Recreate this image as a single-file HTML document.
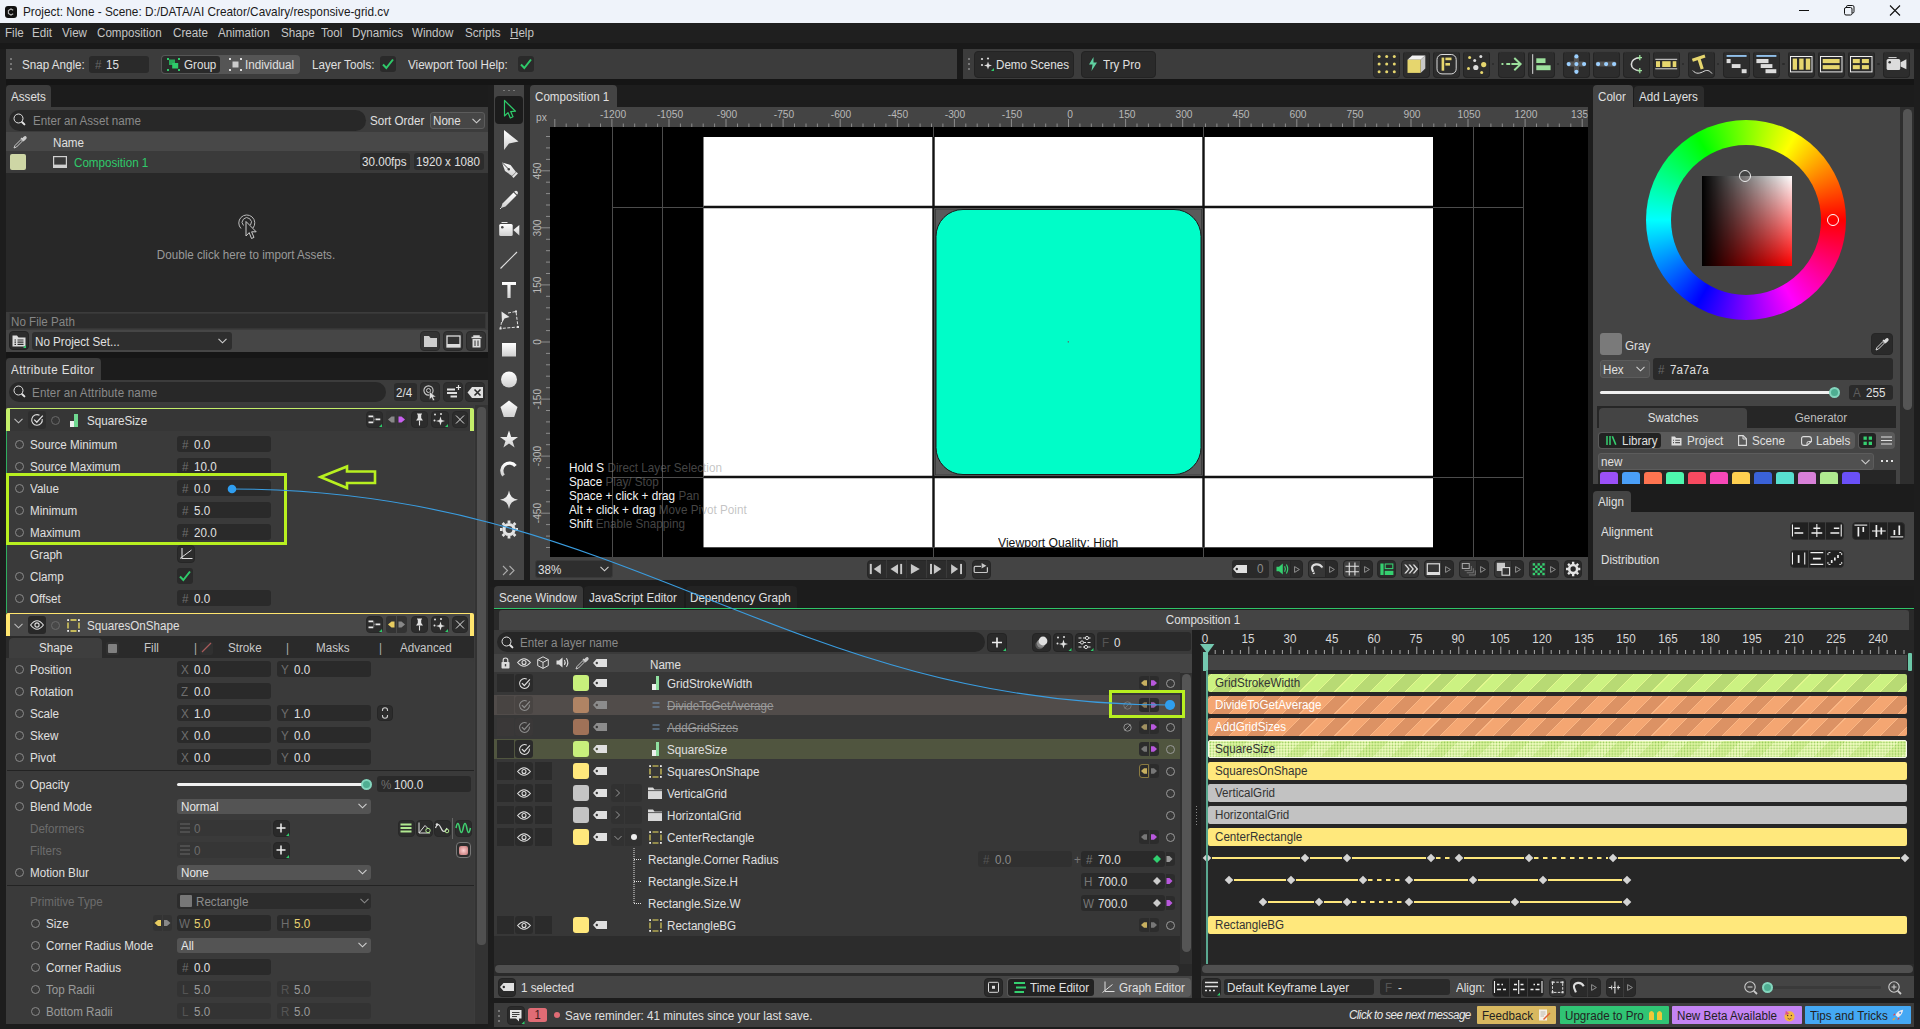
<!DOCTYPE html><html><head><meta charset="utf-8"><title>Cavalry</title><style>
*{box-sizing:border-box;margin:0;padding:0}
html,body{width:1920px;height:1029px;overflow:hidden;background:#1d1d1d}
body{font-family:"Liberation Sans",sans-serif;font-size:12.5px;letter-spacing:0;color:#e0e0e0;-webkit-font-smoothing:antialiased}
#app{position:relative;width:1920px;height:1029px;overflow:hidden;background:#1d1d1d}
.a{position:absolute}
.t{position:absolute;white-space:nowrap;line-height:18px;height:18px;transform:scaleX(.93);transform-origin:0 50%}
.t[style*="text-align:center"]{transform-origin:50% 50%}
.g{color:#8a8a8a}
.d{color:#777}
.fld{position:absolute;background:#2a2a2a;border-radius:3px;height:17px}
.btn{position:absolute;background:#2a2a2a;border-radius:4px;border:1px solid #232323}
.cmb{position:absolute;background:#505050;border-radius:3px;height:17px;border:1px solid #5c5c5c}
.pnl{position:absolute;background:#3a3a3a}
.tab{position:absolute;background:#3a3a3a;border-radius:4px 4px 0 0;height:22px}
.tab2{position:absolute;background:#444;border-radius:4px 4px 0 0;height:22px}
svg{position:absolute;overflow:visible}
.rad{position:absolute;width:9px;height:9px;border:1.2px solid #8a8a8a;border-radius:50%}
</style></head><body><div id="app">
<div class="a" style="left:0;top:0;width:1920px;height:23px;background:#eff3fa"></div>
<svg style="left:5px;top:6px" width="12" height="12" viewBox="0 0 12 12"><rect x="0" y="0" width="12" height="12" rx="3" fill="#111"/><path d="M8.2 4.2 L6 3 L3.4 4.5 V7.5 L6 9 L8.2 7.8" fill="none" stroke="#bbb" stroke-width="1.1"/></svg>
<div class="t" style="left:23px;top:2.5px;color:#1a1a1a;font-size:12.7px">Project: None - Scene: D:/DATA/AI Creator/Cavalry/responsive-grid.cv</div>
<svg style="left:1799px;top:5px" width="102" height="11" viewBox="0 0 102 11"><path d="M0 5.5H10" stroke="#111" stroke-width="1"/><rect x="45.5" y="2.5" width="7.5" height="7.5" rx="1.5" fill="none" stroke="#111"/><path d="M47.5 2.5V1.8Q47.5 .5 48.8 .5H53.5Q55 .5 55 2V6.7Q55 8 53.7 8H53" fill="none" stroke="#111"/><path d="M91 0.5L101 10.5M101 0.5L91 10.5" stroke="#111" stroke-width="1.1"/></svg>
<div class="a" style="left:0;top:23px;width:1920px;height:20px;background:#1f1f1f"></div>
<div class="a" style="left:0;top:43px;width:1920px;height:6px;background:#191919"></div>
<div class="t" style="left:5px;top:24px;color:#c6c6c6">File</div>
<div class="t" style="left:32px;top:24px;color:#c6c6c6">Edit</div>
<div class="t" style="left:62px;top:24px;color:#c6c6c6">View</div>
<div class="t" style="left:97px;top:24px;color:#c6c6c6">Composition</div>
<div class="t" style="left:173px;top:24px;color:#c6c6c6">Create</div>
<div class="t" style="left:218px;top:24px;color:#c6c6c6">Animation</div>
<div class="t" style="left:281px;top:24px;color:#c6c6c6">Shape</div>
<div class="t" style="left:321px;top:24px;color:#c6c6c6">Tool</div>
<div class="t" style="left:352px;top:24px;color:#c6c6c6">Dynamics</div>
<div class="t" style="left:412px;top:24px;color:#c6c6c6">Window</div>
<div class="t" style="left:465px;top:24px;color:#c6c6c6">Scripts</div>
<div class="t" style="left:510px;top:24px;color:#c6c6c6"><u>H</u>elp</div>
<div class="a" style="left:6px;top:79px;width:1908px;height:6px;background:#151515"></div>
<div class="a" style="left:6px;top:49px;width:951px;height:30px;background:#3c3c3c"></div>
<div class="a" style="left:957px;top:49px;width:6px;height:30px;background:#1a1a1a"></div>
<div class="a" style="left:963px;top:49px;width:951px;height:30px;background:#3c3c3c"></div>
<div class="a" style="left:10px;top:58px;width:2px;height:2px;background:#777"></div>
<div class="a" style="left:10px;top:63px;width:2px;height:2px;background:#777"></div>
<div class="a" style="left:10px;top:68px;width:2px;height:2px;background:#777"></div>
<div class="a" style="left:968px;top:58px;width:2px;height:2px;background:#777"></div>
<div class="a" style="left:968px;top:63px;width:2px;height:2px;background:#777"></div>
<div class="a" style="left:968px;top:68px;width:2px;height:2px;background:#777"></div>
<div class="t" style="left:22px;top:56px">Snap Angle:</div>
<div class="fld" style="left:89px;top:56px;width:60px"></div><div class="t d" style="left:95px;top:56px;color:#666">#</div><div class="t" style="left:106px;top:56px">15</div>
<div class="a" style="left:161px;top:55px;width:139px;height:19px;background:#555;border-radius:4px"></div>
<div class="a" style="left:162px;top:56px;width:58px;height:17px;background:#2a2a2a;border-radius:3px"></div>
<svg style="left:167px;top:58px" width="13" height="13" viewBox="0 0 13 13"><g fill="#2fca6a"><rect x="0" y="0" width="2" height="2"/><rect x="11" y="0" width="2" height="2"/><rect x="0" y="11" width="2" height="2"/><rect x="11" y="11" width="2" height="2"/><rect x="2" y="1.5" width="6" height="5.5" fill="#28a858"/><rect x="5.2" y="5" width="6" height="5.5"/></g></svg>
<div class="t" style="left:184px;top:56px">Group</div>
<svg style="left:229px;top:58px" width="13" height="13" viewBox="0 0 13 13"><g fill="#ddd"><rect x="0" y="0" width="2" height="2"/><rect x="11" y="0" width="2" height="2"/><rect x="0" y="11" width="2" height="2"/><rect x="11" y="11" width="2" height="2"/><rect x="3.5" y="3.5" width="6" height="6" fill="#ccc"/></g></svg>
<div class="t" style="left:245px;top:56px">Individual</div>
<div class="t" style="left:312px;top:56px">Layer Tools:</div>
<div class="t" style="left:408px;top:56px">Viewport Tool Help:</div>
<div class="fld" style="left:380px;top:56px;width:16px;height:16px"></div><svg style="left:382px;top:58px" width="12" height="12" viewBox="0 0 12 12"><path d="M1 6.5L4.3 10L11 1.5" fill="none" stroke="#2fca6a" stroke-width="2"/></svg>
<div class="fld" style="left:518px;top:56px;width:16px;height:16px"></div><svg style="left:520px;top:58px" width="12" height="12" viewBox="0 0 12 12"><path d="M1 6.5L4.3 10L11 1.5" fill="none" stroke="#2fca6a" stroke-width="2"/></svg>
<div class="btn" style="left:974px;top:51px;width:100px;height:27px"></div>
<svg style="left:980px;top:57px" width="15" height="15" viewBox="0 0 15 15"><g fill="#ddd"><circle cx="2" cy="2" r="1.1"/><circle cx="8" cy="1.5" r="1.1"/><circle cx="2" cy="8" r="1.1"/><path d="M8 4.5L9 7.5L12 8.5L9 9.5L8 12.5L7 9.5L4 8.5L7 7.5Z"/></g><path d="M14 11V14H11Z" fill="#2fca6a"/></svg>
<div class="t" style="left:996px;top:56px">Demo Scenes</div>
<div class="btn" style="left:1081px;top:51px;width:75px;height:27px"></div>
<svg style="left:1088px;top:57px" width="10" height="14" viewBox="0 0 10 14"><path d="M5.5 0L1 7.5H4.5L3.5 14L9 5.5H5.5Z" fill="#5fd0a0"/></svg>
<div class="t" style="left:1103px;top:56px">Try Pro</div>
<div class="btn" style="left:1372.5px;top:51px;width:27px;height:26.5px;background:#2d2d2d;border-color:#242424;border-top-color:#3a3a3a"></div>
<svg style="left:1372.5px;top:51px" width="27" height="27" viewBox="0 0 27 27"><circle cx="6.1" cy="5.5" r="1.5" fill="#e6d66e"/><circle cx="6.1" cy="13.1" r="1.5" fill="#e6d66e"/><circle cx="6.1" cy="20.7" r="1.5" fill="#e6d66e"/><circle cx="13.7" cy="5.5" r="1.5" fill="#e6d66e"/><circle cx="13.7" cy="13.1" r="1.5" fill="#e6d66e"/><circle cx="13.7" cy="20.7" r="1.5" fill="#e6d66e"/><circle cx="21.3" cy="5.5" r="1.5" fill="#e6d66e"/><circle cx="21.3" cy="13.1" r="1.5" fill="#e6d66e"/><circle cx="21.3" cy="20.7" r="1.5" fill="#e6d66e"/></svg>
<div class="btn" style="left:1402.5px;top:51px;width:27px;height:26.5px;background:#2d2d2d;border-color:#242424;border-top-color:#3a3a3a"></div>
<svg style="left:1402.5px;top:51px" width="27" height="27" viewBox="0 0 27 27"><path d="M4.5 8.75L9.2 4.4H22.3L17.6 8.75Z" fill="#f2f2f2"/><path d="M17.6 8.75L22.3 4.4V17.5L17.6 21.9Z" fill="#c8c8c8"/><rect x="4.5" y="8.75" width="13.1" height="13.15" fill="#e6d66e"/></svg>
<div class="btn" style="left:1432.5px;top:51px;width:27px;height:26.5px;background:#2d2d2d;border-color:#242424;border-top-color:#3a3a3a"></div>
<svg style="left:1432.5px;top:51px" width="27" height="27" viewBox="0 0 27 27"><rect x="4" y="3.5" width="19.2" height="19.4" rx="5" fill="none" stroke="#dcdcdc" stroke-width="1"/><rect x="8.6" y="6.6" width="2.6" height="13.1" fill="#e6d66e"/><rect x="12.4" y="6.6" width="6.1" height="2.6" fill="#e6d66e"/><rect x="12.4" y="12" width="4.6" height="2.6" fill="#e6d66e"/></svg>
<div class="btn" style="left:1462.5px;top:51px;width:27px;height:26.5px;background:#2d2d2d;border-color:#242424;border-top-color:#3a3a3a"></div>
<svg style="left:1462.5px;top:51px" width="27" height="27" viewBox="0 0 27 27"><circle cx="6.6" cy="6.6" r="1.5" fill="#e6d66e"/><circle cx="17.8" cy="5.5" r="1.5" fill="#dcdcdc"/><circle cx="11.7" cy="9.5" r="1.5" fill="#dcdcdc"/><circle cx="20.7" cy="13.6" r="2.6" fill="#e6d66e"/><circle cx="12.8" cy="16.5" r="2.6" fill="#dcdcdc"/><circle cx="5.5" cy="17.5" r="1.5" fill="#e6d66e"/><circle cx="18.7" cy="21.4" r="1.5" fill="#e6d66e"/></svg>
<div class="btn" style="left:1497.5px;top:51px;width:27px;height:26.5px;background:#2d2d2d;border-color:#242424;border-top-color:#3a3a3a"></div>
<svg style="left:1497.5px;top:51px" width="27" height="27" viewBox="0 0 27 27"><path d="M3.5 13.1H5.4M8.3 13.1H12.2M13.4 13.1H22.4M16.3 7L22.6 13.1L16.3 19.2" fill="none" stroke="#9ce09c" stroke-width="2"/></svg>
<div class="btn" style="left:1527.5px;top:51px;width:27px;height:26.5px;background:#2d2d2d;border-color:#242424;border-top-color:#3a3a3a"></div>
<svg style="left:1527.5px;top:51px" width="27" height="27" viewBox="0 0 27 27"><path d="M4.7 3.2V22.9" stroke="#dcdcdc" stroke-width="1"/><rect x="8.3" y="7.3" width="9.2" height="4.7" fill="#9ce09c"/><rect x="8.3" y="14.3" width="14.3" height="4.9" fill="#9ce09c"/></svg>
<div class="btn" style="left:1562.5px;top:51px;width:27px;height:26.5px;background:#2d2d2d;border-color:#242424;border-top-color:#3a3a3a"></div>
<svg style="left:1562.5px;top:51px" width="27" height="27" viewBox="0 0 27 27"><path d="M5.7 13.1H21.1M13.4 5.4V20.8" stroke="#555" stroke-width="5"/><circle cx="13.4" cy="13.1" r="2.1" fill="#9cd0ff"/><circle cx="5.7" cy="13.1" r="2.1" fill="#9cd0ff"/><circle cx="21.1" cy="13.1" r="2.1" fill="#9cd0ff"/><circle cx="13.4" cy="5.4" r="2.1" fill="#9cd0ff"/><circle cx="13.4" cy="20.8" r="2.1" fill="#9cd0ff"/></svg>
<div class="btn" style="left:1592.5px;top:51px;width:27px;height:26.5px;background:#2d2d2d;border-color:#242424;border-top-color:#3a3a3a"></div>
<svg style="left:1592.5px;top:51px" width="27" height="27" viewBox="0 0 27 27"><path d="M5.1 13.1H21.1" stroke="#555" stroke-width="5" stroke-linecap="round"/><circle cx="5.1" cy="13.1" r="2.1" fill="#9cd0ff"/><circle cx="13.1" cy="13.1" r="2.1" fill="#9cd0ff"/><circle cx="21.1" cy="13.1" r="2.1" fill="#9cd0ff"/></svg>
<div class="btn" style="left:1622.5px;top:51px;width:27px;height:26.5px;background:#2d2d2d;border-color:#242424;border-top-color:#3a3a3a"></div>
<svg style="left:1622.5px;top:51px" width="27" height="27" viewBox="0 0 27 27"><path d="M17 6.6C5.5 7.5 5.5 18.8 17 19.7" fill="none" stroke="#dcdcdc" stroke-width="1.6"/><path d="M14.5 6.6H19M16.8 4V9.2M14.5 19.7H19M16.8 17.1V22.3" stroke="#9ce09c" stroke-width="1.3"/></svg>
<div class="btn" style="left:1652.5px;top:51px;width:27px;height:26.5px;background:#2d2d2d;border-color:#242424;border-top-color:#3a3a3a"></div>
<svg style="left:1652.5px;top:51px" width="27" height="27" viewBox="0 0 27 27"><path d="M2.3 8.3H24.2M2.3 17.8H24.2" stroke="#dcdcdc" stroke-width="1"/><rect x="3" y="10.2" width="4" height="5.8" fill="#e6d66e"/><rect x="9.2" y="10.2" width="8.4" height="5.8" fill="#e6d66e"/><rect x="19.7" y="10.2" width="3.6" height="5.8" fill="#e6d66e"/></svg>
<div class="btn" style="left:1687.5px;top:51px;width:27px;height:26.5px;background:#2d2d2d;border-color:#242424;border-top-color:#3a3a3a"></div>
<svg style="left:1687.5px;top:51px" width="27" height="27" viewBox="0 0 27 27"><path d="M4.4 9.2L17 5M10.8 7.2L14.2 18" stroke="#e6d66e" stroke-width="3.2" fill="none"/><path d="M4.8 19.5C8 23.5 12 22.5 16 20.2C20 18.3 22.5 20.5 24 22.6" fill="none" stroke="#dcdcdc" stroke-width="1"/></svg>
<div class="btn" style="left:1722.5px;top:51px;width:27px;height:26.5px;background:#2d2d2d;border-color:#242424;border-top-color:#3a3a3a"></div>
<svg style="left:1722.5px;top:51px" width="27" height="27" viewBox="0 0 27 27"><rect x="3.6" y="4.1" width="20" height="1.7" fill="#9cd0ff"/><rect x="3.6" y="8" width="4" height="4.1" fill="#dcdcdc"/><rect x="8.75" y="13.1" width="8.75" height="3.9" fill="#dcdcdc"/><rect x="18.7" y="18.2" width="4.9" height="4" fill="#dcdcdc"/></svg>
<div class="btn" style="left:1752.5px;top:51px;width:27px;height:26.5px;background:#2d2d2d;border-color:#242424;border-top-color:#3a3a3a"></div>
<svg style="left:1752.5px;top:51px" width="27" height="27" viewBox="0 0 27 27"><rect x="3.4" y="4.1" width="20" height="1.7" fill="#9cd0ff"/><rect x="3.4" y="8" width="12.1" height="4.1" fill="#dcdcdc"/><rect x="7.7" y="13.1" width="11.7" height="3.9" fill="#dcdcdc"/><rect x="12.5" y="18.2" width="10.8" height="4" fill="#dcdcdc"/></svg>
<div class="btn" style="left:1787.5px;top:51px;width:27px;height:26.5px;background:#2d2d2d;border-color:#242424;border-top-color:#3a3a3a"></div>
<svg style="left:1787.5px;top:51px" width="27" height="27" viewBox="0 0 27 27"><rect x="2.5" y="5.5" width="21.5" height="15.4" fill="none" stroke="#eee" stroke-width="1"/><rect x="4.7" y="7.6" width="4.3" height="11.1" fill="#e6d66e"/><rect x="11.2" y="7.6" width="4.4" height="11.1" fill="#e6d66e"/><rect x="17.8" y="7.6" width="4.4" height="11.1" fill="#e6d66e"/></svg>
<div class="btn" style="left:1817.5px;top:51px;width:27px;height:26.5px;background:#2d2d2d;border-color:#242424;border-top-color:#3a3a3a"></div>
<svg style="left:1817.5px;top:51px" width="27" height="27" viewBox="0 0 27 27"><rect x="2.5" y="5.5" width="21.5" height="15.4" fill="none" stroke="#eee" stroke-width="1"/><rect x="4.7" y="8" width="16.9" height="4.1" fill="#e6d66e"/><rect x="4.7" y="14.1" width="16.9" height="4.1" fill="#e6d66e"/></svg>
<div class="btn" style="left:1847.5px;top:51px;width:27px;height:26.5px;background:#2d2d2d;border-color:#242424;border-top-color:#3a3a3a"></div>
<svg style="left:1847.5px;top:51px" width="27" height="27" viewBox="0 0 27 27"><rect x="2.5" y="5.5" width="21.5" height="15.4" fill="none" stroke="#eee" stroke-width="1"/><rect x="4.8" y="8" width="7" height="4.1" fill="#e6d66e"/><rect x="13.9" y="8" width="7" height="4.1" fill="#e6d66e"/><rect x="4.8" y="14.1" width="7" height="4.1" fill="#e6d66e"/><rect x="13.9" y="14.1" width="7" height="4.1" fill="#e6d66e"/></svg>
<div class="btn" style="left:1882.5px;top:51px;width:27px;height:26.5px;background:#2d2d2d;border-color:#242424;border-top-color:#3a3a3a"></div>
<svg style="left:1882.5px;top:51px" width="27" height="27" viewBox="0 0 27 27"><rect x="5.5" y="6.1" width="8.1" height="1" fill="#dcdcdc"/><rect x="3.6" y="8" width="13.6" height="11" rx="1.5" fill="#dcdcdc"/><path d="M17.6 11.2L23.4 8.2V18.2L17.6 15.6Z" fill="#dcdcdc"/><circle cx="6.7" cy="11.2" r="1.3" fill="#333"/></svg>
<div class="a" style="left:1492.1px;top:62.8px;width:2.4px;height:2.4px;border-radius:50%;background:#2a2a2a"></div>
<div class="a" style="left:1557.0px;top:62.8px;width:2.4px;height:2.4px;border-radius:50%;background:#2a2a2a"></div>
<div class="a" style="left:1682.1px;top:62.8px;width:2.4px;height:2.4px;border-radius:50%;background:#2a2a2a"></div>
<div class="a" style="left:1717.1px;top:62.8px;width:2.4px;height:2.4px;border-radius:50%;background:#2a2a2a"></div>
<div class="a" style="left:1782.2px;top:62.8px;width:2.4px;height:2.4px;border-radius:50%;background:#2a2a2a"></div>
<div class="a" style="left:1877.2px;top:62.8px;width:2.4px;height:2.4px;border-radius:50%;background:#2a2a2a"></div>
<div class="a" style="left:6px;top:85px;width:482px;height:22px;background:#1c1c1c"></div>
<div class="tab" style="left:6px;top:85px;width:45px;background:#3c3c3c"></div><div class="t" style="left:11px;top:88px">Assets</div>
<div class="a" style="left:6px;top:107px;width:482px;height:25px;background:#3c3c3c"></div>
<div class="a" style="left:9px;top:110px;width:357px;height:21px;border-radius:11px;background:#282828"></div>
<svg style="left:13px;top:113px" width="14" height="14" viewBox="0 0 14 14"><circle cx="5.5" cy="5.5" r="4.5" fill="none" stroke="#e4e4e4" stroke-width="1"/><path d="M9.2 9.2L11.4 11.4" stroke="#e4e4e4" stroke-width="2" stroke-linecap="round"/></svg>
<div class="t g" style="left:33px;top:112px">Enter an Asset name</div>
<div class="t" style="left:370px;top:112px">Sort Order</div>
<div class="cmb" style="left:430px;top:112px;width:55px;height:16.5px;background:#464646"></div><div class="t" style="left:433px;top:112px">None</div><svg style="left:472px;top:118px" width="9" height="6" viewBox="0 0 9 6"><path d="M0.5 0.8L4.5 4.8L8.5 0.8" fill="none" stroke="#d0d0d0" stroke-width="1.1"/></svg>
<div class="a" style="left:6px;top:132px;width:482px;height:19px;background:#484848"></div>
<svg style="left:13px;top:135px" width="14" height="14" viewBox="0 0 14 14"><path d="M1 13L2 10.5L8 4.5L9.5 6L3.5 12Z" fill="none" stroke="#ccc" stroke-width="1"/><path d="M8 3L11 6M9 4.5L11.2 2.2Q12.5 1 13 2.5Q13.2 3.2 12 4.2L10 6" fill="#ccc" stroke="#ccc" stroke-width="1.4"/></svg>
<div class="t" style="left:53px;top:134px">Name</div>
<div class="a" style="left:6px;top:151px;width:482px;height:22px;background:#3a3a3a"></div>
<div class="a" style="left:10px;top:154px;width:16px;height:16px;border-radius:2px;background:#ced6a5"></div>
<svg style="left:53px;top:156px" width="14" height="12" viewBox="0 0 14 12"><rect x="0.6" y="0.6" width="12.8" height="10.8" fill="none" stroke="#d0d0d0" stroke-width="1.2"/><rect x="0.6" y="8.6" width="12.8" height="2.8" fill="#d0d0d0"/></svg>
<div class="t" style="left:74px;top:154px;color:#2fca6a">Composition 1</div>
<div class="fld" style="left:360px;top:153px;width:50px;height:17px;background:#2c2c2c"></div><div class="t" style="left:362px;top:153px">30.00fps</div>
<div class="fld" style="left:414px;top:153px;width:70px;height:17px;background:#2c2c2c"></div><div class="t" style="left:416px;top:153px">1920 x 1080</div>
<div class="a" style="left:6px;top:173px;width:482px;height:139px;background:#282828"></div>
<svg style="left:236px;top:212px" width="22" height="28" viewBox="0 0 22 28"><path d="M5 16.5A8 8 0 1 1 17 16" fill="none" stroke="#bbb" stroke-width="1"/><path d="M7.5 13.5A4.6 4.6 0 1 1 14.5 13" fill="none" stroke="#bbb" stroke-width="1"/><path d="M10 9.5V24L13.2 20.6L15.5 26.5L18 25.4L15.6 19.8H20.2Z" fill="#282828" stroke="#ccc" stroke-width="1"/></svg>
<div class="t" style="left:96px;top:246px;width:300px;text-align:center;color:#9a9a9a">Double click here to import Assets.</div>
<div class="a" style="left:6px;top:312px;width:482px;height:19px;background:#3c3c3c"></div>
<div class="a" style="left:9px;top:313px;width:477px;height:16px;background:#2c2c2c;border:1px solid #363636"></div>
<div class="t g" style="left:11px;top:313px;color:#868686">No File Path</div>
<div class="a" style="left:6px;top:330px;width:482px;height:22px;background:#464646"></div>
<div class="btn" style="left:9px;top:331px;width:20px;height:19px;background:#2c2c2c"></div>
<svg style="left:12px;top:334px" width="14" height="14" viewBox="0 0 14 14"><path d="M0.5 1.5H5L6.5 3.5H13.5V12.5H0.5Z" fill="#ddd"/><path d="M2.5 6H4M5.5 6H11.5M2.5 8.2H4M5.5 8.2H11.5M2.5 10.4H4M5.5 10.4H11.5" stroke="#2c2c2c" stroke-width="1.2"/><path d="M14 11V14H11Z" fill="#2fca6a"/></svg>
<div class="fld" style="left:32px;top:332px;width:200px;height:18px;background:#2e2e2e"></div><div class="t" style="left:35px;top:333px">No Project Set...</div><svg style="left:218px;top:338px" width="9" height="6" viewBox="0 0 9 6"><path d="M0.5 0.8L4.5 4.8L8.5 0.8" fill="none" stroke="#d0d0d0" stroke-width="1.1"/></svg>
<div class="btn" style="left:420px;top:331px;width:20px;height:20px;background:#333;border-color:#2a2a2a"></div><svg style="left:421.5px;top:332.5px" width="17" height="17" viewBox="0 0 17 17"><path d="M2 3H7L8.5 5H15V14H2Z" fill="#ccc"/></svg>
<div class="btn" style="left:443px;top:331px;width:20px;height:20px;background:#333;border-color:#2a2a2a"></div><svg style="left:444.5px;top:332.5px" width="17" height="17" viewBox="0 0 17 17"><rect x="2" y="3" width="13" height="11" fill="none" stroke="#ddd" stroke-width="1.3"/><rect x="2" y="11" width="13" height="3" fill="#ddd"/></svg>
<div class="btn" style="left:466px;top:331px;width:20px;height:20px;background:#333;border-color:#2a2a2a"></div><svg style="left:467.5px;top:332.5px" width="17" height="17" viewBox="0 0 17 17"><path d="M3.5 4.5H13.5M6 4.5V3H11V4.5" stroke="#ddd" stroke-width="1.5" fill="none"/><path d="M4.5 6H12.5V14.5H4.5Z" fill="#ddd"/><path d="M7 7.5V13M10 7.5V13" stroke="#333" stroke-width="1"/></svg>
<div class="a" style="left:6px;top:352px;width:482px;height:6px;background:#161616"></div><div class="a" style="left:6px;top:358px;width:482px;height:22px;background:#1c1c1c"></div>
<div class="tab" style="left:6px;top:358px;width:95px;background:#3c3c3c"></div><div class="t" style="left:11px;top:361px;letter-spacing:0.45px">Attribute Editor</div>
<div class="a" style="left:6px;top:380px;width:482px;height:644px;background:#3c3c3c"></div>
<div class="a" style="left:9px;top:382px;width:377px;height:20px;border-radius:10px;background:#282828"></div>
<svg style="left:13px;top:385px" width="14" height="14" viewBox="0 0 14 14"><circle cx="5.5" cy="5.5" r="4.5" fill="none" stroke="#e4e4e4" stroke-width="1"/><path d="M9.2 9.2L11.4 11.4" stroke="#e4e4e4" stroke-width="2" stroke-linecap="round"/></svg>
<div class="t g" style="left:32px;top:384px;letter-spacing:0.15px">Enter an Attribute name</div>
<div class="fld" style="left:394px;top:383px;width:23px;height:18px;background:#2c2c2c"></div><div class="t" style="left:396px;top:383.7px">2/4</div>
<div class="btn" style="left:420px;top:382px;width:20px;height:20px;background:#2e2e2e;border-color:#2a2a2a"></div><svg style="left:420.5px;top:382.5px" width="19" height="19" viewBox="0 0 19 19"><circle cx="7.5" cy="7.5" r="4.6" fill="none" stroke="#ccc" stroke-width="1.1"/><circle cx="7.5" cy="7.5" r="2" fill="none" stroke="#ccc" stroke-width="1"/><path d="M8.5 8.5V16.5L10.6 14.6L12 17.8L13.6 17L12.2 14H15Z" fill="#ddd" stroke="#333" stroke-width=".5"/></svg>
<div class="btn" style="left:443px;top:382px;width:20px;height:20px;background:#2e2e2e;border-color:#2a2a2a"></div><svg style="left:443.5px;top:382.5px" width="19" height="19" viewBox="0 0 19 19"><path d="M3 6.5H11M3 10H13M6.5 13.5H13" stroke="#e0e0e0" stroke-width="1.8"/><path d="M12 4.5H17M14.5 2V7" stroke="#e0e0e0" stroke-width="1.2"/></svg>
<div class="btn" style="left:465px;top:382px;width:20px;height:20px;background:#2e2e2e;border-color:#2a2a2a"></div><svg style="left:465.5px;top:382.5px" width="19" height="19" viewBox="0 0 19 19"><path d="M1.5 9.5L6 4H17V15H6Z" fill="#e0e0e0"/><path d="M8.5 6.5L14.5 12.5M14.5 6.5L8.5 12.5" stroke="#2c2c2c" stroke-width="1.6"/></svg>
<div class="a" style="left:475px;top:405px;width:13px;height:619px;background:#333"></div>
<div class="a" style="left:477px;top:407px;width:8.5px;height:538px;border-radius:4px;background:#505050"></div>
<div class="a" style="left:6px;top:405px;width:468px;height:619px;background:#3a3a3a"></div>
<div class="a" style="left:6px;top:408px;width:468px;height:23px;background:#363636;border-top:1.5px solid #c4ee6a;border-left:4px solid #c4ee6a;border-right:4px solid #c4ee6a;border-radius:2px 2px 0 0"></div>
<div class="a" style="left:6px;top:431px;width:1px;height:182px;background:#2fae60"></div>
<svg style="left:14px;top:418px" width="9" height="6" viewBox="0 0 9 6"><path d="M0.5 0.8L4.5 4.8L8.5 0.8" fill="none" stroke="#bbb" stroke-width="1.1"/></svg>
<div class="a" style="left:28px;top:411px;width:18px;height:18px;background:#2e2e2e;border-radius:3px"></div>
<svg style="left:30px;top:413px" width="14" height="14" viewBox="0 0 14 14"><path d="M12.2 6A5.3 5.3 0 1 1 9.5 2.3" fill="none" stroke="#ddd" stroke-width="1.1"/><path d="M4.2 6.6L6.8 9.2L12.8 2.6" fill="none" stroke="#ddd" stroke-width="1.3"/></svg>
<div class="rad" style="left:50.5px;top:415.5px;border-color:#6a6a6a"></div>
<div class="a" style="left:70px;top:421px;width:4px;height:6px;background:#eee"></div><div class="a" style="left:74px;top:413.5px;width:3.5px;height:13.5px;background:#6fd890"></div>
<div class="t" style="left:87px;top:412px;color:#e0e0e0">SquareSize</div>
<div class="btn" style="left:366px;top:411px;width:17px;height:17px;background:#2c2c2c;border-color:#282828"></div><svg style="left:366px;top:411px" width="17" height="17" viewBox="0 0 17 17"><path d="M2.5 5.3H7.3M2.5 11.3H7.3M9.5 8.3H14.3" stroke="#e8e8e8" stroke-width="1.7"/><path d="M7.8 5.3V11.3M7.8 8.3H9.5" stroke="#777" stroke-width="1"/><path d="M16 13V16H13Z" fill="#2fca6a"/></svg><div class="a" style="left:386px;top:411px;width:10px;height:17px;background:#333;border-radius:3px 0 0 3px"></div><div class="a" style="left:397px;top:411px;width:10px;height:17px;background:#333;border-radius:0 3px 3px 0"></div><svg style="left:386px;top:411px" width="21" height="17" viewBox="0 0 21 17"><path d="M2 8.5L5.5 5.5H8.5V11.5H5.5Z" fill="#888"/><path d="M19 8.5L15.5 5.5H12.5V11.5H15.5Z" fill="#c860f0"/></svg><div class="btn" style="left:411px;top:411px;width:17px;height:17px;background:#2c2c2c;border-color:#282828"></div><svg style="left:411px;top:411px" width="17" height="17" viewBox="0 0 17 17"><path d="M6 2.5H11V3.5H10.2V7L12 9.5H5L6.8 7V3.5H6Z" fill="#e0e0e0"/><path d="M8.5 9.5V14.5" stroke="#e0e0e0" stroke-width="1.1"/></svg><div class="btn" style="left:431px;top:411px;width:18px;height:17px;background:#2c2c2c;border-color:#282828"></div><svg style="left:431px;top:411px" width="18" height="17" viewBox="0 0 18 17"><g fill="#e0e0e0"><circle cx="4" cy="3.5" r="1"/><circle cx="10" cy="3" r="1"/><circle cx="3.5" cy="9.5" r="1"/><path d="M9.5 5.5L10.6 9L14 10L10.6 11L9.5 14.5L8.4 11L5 10L8.4 9Z"/></g><path d="M17 13V16H14Z" fill="#2fca6a"/></svg><div class="btn" style="left:452px;top:411px;width:16px;height:17px;background:#2c2c2c;border-color:#282828"></div><svg style="left:452px;top:411px" width="16" height="17" viewBox="0 0 16 17"><path d="M4 4.5L12 12.5M12 4.5L4 12.5" stroke="#e0e0e0" stroke-width="1"/></svg>
<div class="rad" style="left:14.5px;top:439.5px;border-color:#8a8a8a"></div><div class="t" style="left:30px;top:436px;color:#e0e0e0">Source Minimum</div><div class="fld" style="left:177px;top:436px;width:94px;height:16px;background:#2a2a2a"></div><div class="t" style="left:182px;top:436px;color:#6e6e6e">#</div><div class="t" style="left:194px;top:436px;color:#e0e0e0">0.0</div>
<div class="rad" style="left:14.5px;top:461.5px;border-color:#8a8a8a"></div><div class="t" style="left:30px;top:458px;color:#e0e0e0">Source Maximum</div><div class="fld" style="left:177px;top:458px;width:94px;height:16px;background:#2a2a2a"></div><div class="t" style="left:182px;top:458px;color:#6e6e6e">#</div><div class="t" style="left:194px;top:458px;color:#e0e0e0">10.0</div>
<div class="rad" style="left:14.5px;top:483.5px;border-color:#8a8a8a"></div><div class="t" style="left:30px;top:480px;color:#e0e0e0">Value</div><div class="fld" style="left:177px;top:480px;width:94px;height:16px;background:#2a2a2a"></div><div class="t" style="left:182px;top:480px;color:#6e6e6e">#</div><div class="t" style="left:194px;top:480px;color:#e0e0e0">0.0</div>
<div class="rad" style="left:14.5px;top:505.5px;border-color:#8a8a8a"></div><div class="t" style="left:30px;top:502px;color:#e0e0e0">Minimum</div><div class="fld" style="left:177px;top:502px;width:94px;height:16px;background:#2a2a2a"></div><div class="t" style="left:182px;top:502px;color:#6e6e6e">#</div><div class="t" style="left:194px;top:502px;color:#e0e0e0">5.0</div>
<div class="rad" style="left:14.5px;top:527.5px;border-color:#8a8a8a"></div><div class="t" style="left:30px;top:524px;color:#e0e0e0">Maximum</div><div class="fld" style="left:177px;top:524px;width:94px;height:16px;background:#2a2a2a"></div><div class="t" style="left:182px;top:524px;color:#6e6e6e">#</div><div class="t" style="left:194px;top:524px;color:#e0e0e0">20.0</div>
<div class="t" style="left:30px;top:546px;color:#e0e0e0">Graph</div>
<div class="btn" style="left:177px;top:545px;width:18px;height:18px;background:#2c2c2c;border-color:#262626"></div><svg style="left:177px;top:545px" width="18" height="18" viewBox="0 0 18 18"><path d="M5 3V13.5H15.5" fill="none" stroke="#ddd" stroke-width="1.1"/><path d="M3 13.5L14.5 5" stroke="#ddd" stroke-width="1"/></svg>
<div class="rad" style="left:14.5px;top:571.5px;border-color:#8a8a8a"></div><div class="t" style="left:30px;top:568px;color:#e0e0e0">Clamp</div>
<div class="fld" style="left:177px;top:568px;width:16px;height:16px"></div><svg style="left:179px;top:570px" width="12" height="12" viewBox="0 0 12 12"><path d="M1 6.5L4.3 10L11 1.5" fill="none" stroke="#2fca6a" stroke-width="2"/></svg>
<div class="rad" style="left:14.5px;top:593.5px;border-color:#8a8a8a"></div><div class="t" style="left:30px;top:590px;color:#e0e0e0">Offset</div><div class="fld" style="left:177px;top:590px;width:94px;height:16px;background:#2a2a2a"></div><div class="t" style="left:182px;top:590px;color:#6e6e6e">#</div><div class="t" style="left:194px;top:590px;color:#e0e0e0">0.0</div>
<div class="a" style="left:6px;top:612.5px;width:468px;height:23.5px;background:#484848;border-top:1.5px solid #ffe56e;border-left:4px solid #ffe56e;border-right:4px solid #ffe56e;border-radius:2px 2px 0 0"></div>
<svg style="left:14px;top:623px" width="9" height="6" viewBox="0 0 9 6"><path d="M0.5 0.8L4.5 4.8L8.5 0.8" fill="none" stroke="#bbb" stroke-width="1.1"/></svg>
<div class="a" style="left:28px;top:616px;width:18px;height:18px;background:#282828;border-radius:3px"></div>
<svg style="left:30px;top:620px" width="14" height="10" viewBox="0 0 14 10"><path d="M0.6 5Q7 -3.4 13.4 5Q7 13.4 0.6 5Z" fill="none" stroke="#ddd" stroke-width="1.1"/><circle cx="7" cy="5" r="2.1" fill="none" stroke="#ddd" stroke-width="1.1"/></svg>
<div class="rad" style="left:50.5px;top:620.5px;border-color:#6a6a6a"></div>
<svg style="left:67px;top:619px" width="13" height="13" viewBox="0 0 13 13"><path d="M3.5 1H9.5M3.5 12H9.5M1 3.5V9.5M12 3.5V9.5" stroke="#f0e060" stroke-width="1.3"/><g fill="#eee"><rect x="0.2" y="0.2" width="1.8" height="1.8"/><rect x="11" y="0.2" width="1.8" height="1.8"/><rect x="0.2" y="11" width="1.8" height="1.8"/><rect x="11" y="11" width="1.8" height="1.8"/></g></svg>
<div class="t" style="left:87px;top:617px;color:#e0e0e0">SquaresOnShape</div>
<div class="btn" style="left:366px;top:616px;width:17px;height:17px;background:#2c2c2c;border-color:#282828"></div><svg style="left:366px;top:616px" width="17" height="17" viewBox="0 0 17 17"><path d="M2.5 5.3H7.3M2.5 11.3H7.3M9.5 8.3H14.3" stroke="#e8e8e8" stroke-width="1.7"/><path d="M7.8 5.3V11.3M7.8 8.3H9.5" stroke="#777" stroke-width="1"/><path d="M16 13V16H13Z" fill="#2fca6a"/></svg><div class="a" style="left:386px;top:616px;width:10px;height:17px;background:#333;border-radius:3px 0 0 3px"></div><div class="a" style="left:397px;top:616px;width:10px;height:17px;background:#333;border-radius:0 3px 3px 0"></div><svg style="left:386px;top:616px" width="21" height="17" viewBox="0 0 21 17"><path d="M2 8.5L5.5 5.5H8.5V11.5H5.5Z" fill="#e8cc60"/><path d="M19 8.5L15.5 5.5H12.5V11.5H15.5Z" fill="#888"/></svg><div class="btn" style="left:411px;top:616px;width:17px;height:17px;background:#2c2c2c;border-color:#282828"></div><svg style="left:411px;top:616px" width="17" height="17" viewBox="0 0 17 17"><path d="M6 2.5H11V3.5H10.2V7L12 9.5H5L6.8 7V3.5H6Z" fill="#e0e0e0"/><path d="M8.5 9.5V14.5" stroke="#e0e0e0" stroke-width="1.1"/></svg><div class="btn" style="left:431px;top:616px;width:18px;height:17px;background:#2c2c2c;border-color:#282828"></div><svg style="left:431px;top:616px" width="18" height="17" viewBox="0 0 18 17"><g fill="#e0e0e0"><circle cx="4" cy="3.5" r="1"/><circle cx="10" cy="3" r="1"/><circle cx="3.5" cy="9.5" r="1"/><path d="M9.5 5.5L10.6 9L14 10L10.6 11L9.5 14.5L8.4 11L5 10L8.4 9Z"/></g><path d="M17 13V16H14Z" fill="#2fca6a"/></svg><div class="btn" style="left:452px;top:616px;width:16px;height:17px;background:#2c2c2c;border-color:#282828"></div><svg style="left:452px;top:616px" width="16" height="17" viewBox="0 0 16 17"><path d="M4 4.5L12 12.5M12 4.5L4 12.5" stroke="#e0e0e0" stroke-width="1"/></svg>
<div class="a" style="left:6px;top:636px;width:468px;height:22px;background:#2a2a2a"></div><div class="a" style="left:6px;top:657.7px;width:468px;height:8px;background:#3a3a3a;border-radius:4px 4px 0 0"></div>
<div class="a" style="left:8.8px;top:638px;width:93.2px;height:20px;background:#3e3e3e;border-radius:4px 4px 0 0"></div>
<div class="a" style="left:106px;top:642px;width:13px;height:13px;background:#303030;border-radius:2px"></div><div class="a" style="left:199.5px;top:641.5px;width:13px;height:13px;background:#303030;border-radius:2px"></div>
<div class="t" style="left:39px;top:639px;color:#e0e0e0">Shape</div>
<div class="a" style="left:108px;top:644px;width:9px;height:9px;background:#808080;border-radius:1px"></div>
<div class="t" style="left:144px;top:639px;color:#c8c8c8">Fill</div>
<div class="t" style="left:194px;top:639px;color:#aaa">|</div>
<div class="t" style="left:286px;top:639px;color:#aaa">|</div>
<div class="t" style="left:379px;top:639px;color:#aaa">|</div>
<svg style="left:201px;top:642px" width="11" height="11" viewBox="0 0 11 11"><path d="M1 10L10 1" stroke="#a85a5a" stroke-width="1.2"/></svg>
<div class="t" style="left:228px;top:639px;color:#c8c8c8">Stroke</div><div class="t" style="left:316px;top:639px;color:#c8c8c8">Masks</div><div class="t" style="left:400px;top:639px;color:#c8c8c8">Advanced</div>
<div class="rad" style="left:14.5px;top:664.5px;border-color:#8a8a8a"></div><div class="t" style="left:30px;top:661px;color:#e0e0e0">Position</div><div class="fld" style="left:177px;top:661px;width:94px;height:16px;background:#2a2a2a"></div><div class="t" style="left:181px;top:661px;color:#6e6e6e">X</div><div class="t" style="left:194px;top:661px;color:#e0e0e0">0.0</div><div class="fld" style="left:277px;top:661px;width:94px;height:16px;background:#2a2a2a"></div><div class="t" style="left:281px;top:661px;color:#6e6e6e">Y</div><div class="t" style="left:294px;top:661px;color:#e0e0e0">0.0</div>
<div class="rad" style="left:14.5px;top:708.5px;border-color:#8a8a8a"></div><div class="t" style="left:30px;top:705px;color:#e0e0e0">Scale</div><div class="fld" style="left:177px;top:705px;width:94px;height:16px;background:#2a2a2a"></div><div class="t" style="left:181px;top:705px;color:#6e6e6e">X</div><div class="t" style="left:194px;top:705px;color:#e0e0e0">1.0</div><div class="fld" style="left:277px;top:705px;width:94px;height:16px;background:#2a2a2a"></div><div class="t" style="left:281px;top:705px;color:#6e6e6e">Y</div><div class="t" style="left:294px;top:705px;color:#e0e0e0">1.0</div>
<div class="rad" style="left:14.5px;top:730.5px;border-color:#8a8a8a"></div><div class="t" style="left:30px;top:727px;color:#e0e0e0">Skew</div><div class="fld" style="left:177px;top:727px;width:94px;height:16px;background:#2a2a2a"></div><div class="t" style="left:181px;top:727px;color:#6e6e6e">X</div><div class="t" style="left:194px;top:727px;color:#e0e0e0">0.0</div><div class="fld" style="left:277px;top:727px;width:94px;height:16px;background:#2a2a2a"></div><div class="t" style="left:281px;top:727px;color:#6e6e6e">Y</div><div class="t" style="left:294px;top:727px;color:#e0e0e0">0.0</div>
<div class="rad" style="left:14.5px;top:752.5px;border-color:#8a8a8a"></div><div class="t" style="left:30px;top:749px;color:#e0e0e0">Pivot</div><div class="fld" style="left:177px;top:749px;width:94px;height:16px;background:#2a2a2a"></div><div class="t" style="left:181px;top:749px;color:#6e6e6e">X</div><div class="t" style="left:194px;top:749px;color:#e0e0e0">0.0</div><div class="fld" style="left:277px;top:749px;width:94px;height:16px;background:#2a2a2a"></div><div class="t" style="left:281px;top:749px;color:#6e6e6e">Y</div><div class="t" style="left:294px;top:749px;color:#e0e0e0">0.0</div>
<div class="rad" style="left:14.5px;top:686.5px;border-color:#8a8a8a"></div><div class="t" style="left:30px;top:683px;color:#e0e0e0">Rotation</div><div class="fld" style="left:177px;top:683px;width:94px;height:16px;background:#2a2a2a"></div><div class="t" style="left:181px;top:683px;color:#6e6e6e">Z</div><div class="t" style="left:194px;top:683px;color:#e0e0e0">0.0</div>
<div class="btn" style="left:377px;top:705px;width:16px;height:16px;background:#2c2c2c;border-color:#262626"></div><svg style="left:377px;top:705px" width="16" height="16" viewBox="0 0 16 16"><path d="M5.5 6V5Q5.5 2.8 8 2.8Q10.5 2.8 10.5 5V6M5.5 10V11Q5.5 13.2 8 13.2Q10.5 13.2 10.5 11V10" fill="none" stroke="#ccc" stroke-width="1.1"/></svg>
<div class="a" style="left:7px;top:770px;width:467px;height:1px;background:#232323"></div>
<div class="rad" style="left:14.5px;top:779.5px;border-color:#8a8a8a"></div><div class="t" style="left:30px;top:776px;color:#e0e0e0">Opacity</div>
<div class="a" style="left:177px;top:782.5px;width:189px;height:3px;border-radius:2px;background:#f0f0f0"></div><div class="a" style="left:360.5px;top:778.5px;width:11px;height:11px;border-radius:50%;background:#4fae92;border:2.5px solid #84d6be"></div>
<div class="fld" style="left:377px;top:776px;width:94px;height:16px;background:#2a2a2a"></div><div class="t" style="left:381px;top:776px;color:#6e6e6e">%</div><div class="t" style="left:394px;top:776px;color:#e0e0e0">100.0</div>
<div class="rad" style="left:14.5px;top:801.5px;border-color:#8a8a8a"></div><div class="t" style="left:30px;top:798px;color:#e0e0e0">Blend Mode</div><div class="cmb" style="left:177px;top:798.5px;width:194px;height:15px;border:none;background:#545454"></div><div class="t" style="left:181px;top:798px;color:#e8e8e8">Normal</div><svg style="left:358px;top:803px" width="9" height="6" viewBox="0 0 9 6"><path d="M0.5 0.8L4.5 4.8L8.5 0.8" fill="none" stroke="#d0d0d0" stroke-width="1.1"/></svg>
<div class="t" style="left:30px;top:820px;color:#6c6c6c">Deformers</div>
<div class="fld" style="left:177px;top:820px;width:94px;height:16px;background:#363636"></div>
<svg style="left:180px;top:823px" width="10" height="10" viewBox="0 0 10 10"><path d="M0 1H10M0 5H10M0 9H10" stroke="#666" stroke-width="1"/></svg>
<div class="t" style="left:194px;top:820px;color:#6c6c6c">0</div>
<div class="btn" style="left:273px;top:820px;width:17px;height:17px;background:#2a2a2a;border-color:#262626"></div><svg style="left:273px;top:820px" width="17" height="17" viewBox="0 0 17 17"><path d="M3.5 8H12.5M8 3.5V12.5" stroke="#eee" stroke-width="1.5"/><path d="M16 13V16H13Z" fill="#2fca6a"/></svg>
<div class="t" style="left:30px;top:842px;color:#6c6c6c">Filters</div>
<div class="fld" style="left:177px;top:842px;width:94px;height:16px;background:#363636"></div>
<svg style="left:180px;top:845px" width="10" height="10" viewBox="0 0 10 10"><path d="M0 1H10M0 5H10M0 9H10" stroke="#666" stroke-width="1"/></svg>
<div class="t" style="left:194px;top:842px;color:#6c6c6c">0</div>
<div class="btn" style="left:273px;top:842px;width:17px;height:17px;background:#2a2a2a;border-color:#262626"></div><svg style="left:273px;top:842px" width="17" height="17" viewBox="0 0 17 17"><path d="M3.5 8H12.5M8 3.5V12.5" stroke="#eee" stroke-width="1.5"/><path d="M16 13V16H13Z" fill="#2fca6a"/></svg>
<div class="btn" style="left:398px;top:820px;width:17px;height:17px;background:#2c2c2c;border-color:#282828"></div><svg style="left:398px;top:820px" width="17" height="17" viewBox="0 0 17 17"><path d="M2.5 4.5H13.5M2.5 8H13.5M2.5 11.5H13.5" stroke="#b0e890" stroke-width="2"/></svg>
<div class="btn" style="left:416px;top:820px;width:17px;height:17px;background:#2c2c2c;border-color:#282828"></div><svg style="left:416px;top:820px" width="17" height="17" viewBox="0 0 17 17"><path d="M3 2.5V13H14" fill="none" stroke="#ddd" stroke-width="1"/><path d="M3 13L9 5.5L11.5 8" fill="none" stroke="#ddd" stroke-width="1"/><circle cx="12" cy="10.5" r="2.2" fill="none" stroke="#b0e890" stroke-width="1"/></svg>
<div class="btn" style="left:434px;top:820px;width:17px;height:17px;background:#2c2c2c;border-color:#282828"></div><svg style="left:434px;top:820px" width="17" height="17" viewBox="0 0 17 17"><path d="M1.5 8Q4 1 7 8T13 8" fill="none" stroke="#ddd" stroke-width="1.2"/><circle cx="3" cy="4.5" r="1.3" fill="#ddd"/><circle cx="13" cy="11" r="1.8" fill="none" stroke="#b0e890" stroke-width="1"/></svg>
<div class="btn" style="left:455px;top:820px;width:17px;height:17px;background:#2c2c2c;border-color:#282828"></div><svg style="left:455px;top:820px" width="17" height="17" viewBox="0 0 17 17"><path d="M1 8Q2.8 -1 4.6 8T8.2 8T11.8 8T15.4 8" fill="none" stroke="#40d070" stroke-width="1.5"/></svg>
<div class="a" style="left:452px;top:818px;width:1px;height:21px;background:#666"></div>
<div class="btn" style="left:456px;top:842px;width:15px;height:16px;background:#2c2c2c;border-color:#777"></div><div class="a" style="left:459px;top:845.5px;width:9px;height:9px;border-radius:2px;background:radial-gradient(#ffd0d0,#c07070)"></div>
<div class="rad" style="left:14.5px;top:867.5px;border-color:#8a8a8a"></div><div class="t" style="left:30px;top:864px;color:#e0e0e0">Motion Blur</div><div class="cmb" style="left:177px;top:864.5px;width:194px;height:15px;border:none;background:#545454"></div><div class="t" style="left:181px;top:864px;color:#e8e8e8">None</div><svg style="left:358px;top:869px" width="9" height="6" viewBox="0 0 9 6"><path d="M0.5 0.8L4.5 4.8L8.5 0.8" fill="none" stroke="#d0d0d0" stroke-width="1.1"/></svg>
<div class="a" style="left:7px;top:885px;width:467px;height:1px;background:#232323"></div>
<div class="t" style="left:30px;top:893px;color:#6c6c6c">Primitive Type</div>
<div class="cmb" style="left:177px;top:893.3px;width:194px;height:15.4px;background:#2c2c2c;border:none"></div><div class="a" style="left:180px;top:895px;width:12px;height:12px;background:#777;border-radius:1px"></div><div class="t" style="left:196px;top:893px;color:#8c8c8c">Rectangle</div><svg style="left:360px;top:898px" width="9" height="6" viewBox="0 0 9 6"><path d="M0.5 0.8L4.5 4.8L8.5 0.8" fill="none" stroke="#888" stroke-width="1.1"/></svg>
<div class="rad" style="left:30.5px;top:918.5px;border-color:#8a8a8a"></div><div class="t" style="left:46px;top:915px;color:#e0e0e0">Size</div><div class="a" style="left:153px;top:915px;width:9px;height:16px;background:#333;border-radius:3px 0 0 3px"></div><div class="a" style="left:163px;top:915px;width:9px;height:16px;background:#333;border-radius:0 3px 3px 0"></div><svg style="left:153px;top:915px" width="19" height="16" viewBox="0 0 19 16"><path d="M1.5 8L5 5H8V11H5Z" fill="#e8cc60"/><path d="M17.5 8L14 5H11V11H14Z" fill="#888"/></svg>
<div class="fld" style="left:177px;top:915px;width:94px;height:16px;background:#2a2a2a"></div><div class="t" style="left:179px;top:915px;color:#6e6e6e">W</div><div class="t" style="left:194px;top:915px;color:#e8d070">5.0</div><div class="fld" style="left:277px;top:915px;width:94px;height:16px;background:#2a2a2a"></div><div class="t" style="left:281px;top:915px;color:#6e6e6e">H</div><div class="t" style="left:294px;top:915px;color:#e8d070">5.0</div>
<div class="rad" style="left:30.5px;top:940.5px;border-color:#8a8a8a"></div><div class="t" style="left:46px;top:937px;color:#e0e0e0">Corner Radius Mode</div><div class="cmb" style="left:177px;top:937.5px;width:194px;height:15px;border:none;background:#545454"></div><div class="t" style="left:181px;top:937px;color:#e8e8e8">All</div><svg style="left:358px;top:942px" width="9" height="6" viewBox="0 0 9 6"><path d="M0.5 0.8L4.5 4.8L8.5 0.8" fill="none" stroke="#d0d0d0" stroke-width="1.1"/></svg>
<div class="rad" style="left:30.5px;top:962.5px;border-color:#8a8a8a"></div><div class="t" style="left:46px;top:959px;color:#e0e0e0">Corner Radius</div><div class="fld" style="left:177px;top:959px;width:94px;height:16px;background:#2a2a2a"></div><div class="t" style="left:182px;top:959px;color:#6e6e6e">#</div><div class="t" style="left:194px;top:959px;color:#e0e0e0">0.0</div>
<div class="rad" style="left:30.5px;top:984.5px;border-color:#8a8a8a"></div><div class="t" style="left:46px;top:981px;color:#9a9a9a">Top Radii</div><div class="fld" style="left:177px;top:981px;width:94px;height:16px;background:#333"></div><div class="t" style="left:182px;top:981px;color:#555">L</div><div class="t" style="left:194px;top:981px;color:#9a9a9a">5.0</div><div class="fld" style="left:277px;top:981px;width:94px;height:16px;background:#333"></div><div class="t" style="left:281px;top:981px;color:#555">R</div><div class="t" style="left:294px;top:981px;color:#9a9a9a">5.0</div>
<div class="rad" style="left:30.5px;top:1006.5px;border-color:#8a8a8a"></div><div class="t" style="left:46px;top:1003px;color:#9a9a9a">Bottom Radii</div><div class="fld" style="left:177px;top:1003px;width:94px;height:16px;background:#333"></div><div class="t" style="left:182px;top:1003px;color:#555">L</div><div class="t" style="left:194px;top:1003px;color:#9a9a9a">5.0</div><div class="fld" style="left:277px;top:1003px;width:94px;height:16px;background:#333"></div><div class="t" style="left:281px;top:1003px;color:#555">R</div><div class="t" style="left:294px;top:1003px;color:#9a9a9a">5.0</div>
<div class="a" style="left:6.3px;top:472.6px;width:281px;height:72.6px;border:3px solid #b8f020"></div>
<svg style="left:310px;top:460px" width="75" height="34" viewBox="310 460 75 34"><path d="M320.5 477L347 466.5V471.5H375V483H347V488L320.5 477Z" fill="none" stroke="#b8f020" stroke-width="2.6" stroke-linejoin="miter"/></svg>
<div class="a" style="left:6px;top:1024px;width:482px;height:5px;background:#1c1c1c"></div>
<div class="a" style="left:494px;top:85px;width:30px;height:498px;background:#444"></div>
<div class="a" style="left:503px;top:89.5px;width:2px;height:1.6px;background:#7a7a7a"></div>
<div class="a" style="left:508px;top:89.5px;width:2px;height:1.6px;background:#7a7a7a"></div>
<div class="a" style="left:513px;top:89.5px;width:2px;height:1.6px;background:#7a7a7a"></div>
<div class="a" style="left:495px;top:96px;width:28px;height:28px;background:#1c1c1c;border-radius:4px"></div>
<svg style="left:494px;top:85px" width="30" height="498" viewBox="494 85 30 498"><defs><linearGradient id="tg" x1="0" y1="0" x2="0" y2="1"><stop offset="0" stop-color="#fff"/><stop offset="1" stop-color="#cfcfcf"/></linearGradient></defs><path d="M504.5 100.5V116L508 112.6L510.3 118L513 116.8L510.7 111.6L515.5 111.2Z" fill="none" stroke="#2fca6a" stroke-width="1.2" stroke-linejoin="round"/><path d="M504 130L518.5 141.5L509 143.5L504 150Z" fill="url(#tg)"/><path d="M502 162.5L510.5 165L516 172L512 176L505 171Z" fill="url(#tg)"/><path d="M502 162.5L508.5 169" stroke="#444" stroke-width="1"/><circle cx="508.8" cy="169.3" r="1.2" fill="#444"/><path d="M512.8 177.2L517.2 172.8" stroke="#e4e4e4" stroke-width="2"/><path d="M501 208L502.5 203.5L513.5 192.5L516.5 195.5L505.5 206.5Z" fill="url(#tg)"/><path d="M514.2 191.8Q516 190 517.5 191.5Q518.8 193 517.2 194.8Z" fill="#e4e4e4"/><path d="M500 209L501.5 207.5" stroke="#ddd" stroke-width="1"/><rect x="501.5" y="222" width="6" height="1" fill="#e4e4e4"/><rect x="499.2" y="224" width="13.5" height="12" rx="1.5" fill="url(#tg)"/><path d="M513.3 230L519.3 225V235.5Z" fill="url(#tg)"/><circle cx="502.3" cy="227.3" r="1.3" fill="#444"/><path d="M500.5 268.5L517 252" stroke="#e0e0e0" stroke-width="1.1"/><path d="M502 282H516V285H510.6V298H507.4V285H502Z" fill="url(#tg)"/><path d="M501.5 311.5L509.5 317L504.5 318.5L502 323Z" fill="#e4e4e4"/><path d="M508 313L516 311.5L518 327L500.5 328.5L501.5 322" fill="none" stroke="#e0e0e0" stroke-width="1" stroke-dasharray="3 1.5"/><rect x="515" y="310.5" width="2" height="2" fill="#e4e4e4"/><rect x="517" y="326" width="2" height="2" fill="#e4e4e4"/><rect x="499.5" y="327.5" width="2" height="2" fill="#e4e4e4"/><rect x="502" y="343" width="14" height="13.5" fill="url(#tg)"/><circle cx="509" cy="379.5" r="8" fill="url(#tg)"/><path d="M509 400.5L517.5 407L514.2 417H503.8L500.5 407Z" fill="url(#tg)"/><path d="M509 430.5L511.2 437H518L512.5 441L514.6 447.6L509 443.6L503.4 447.6L505.5 441L500 437H506.8Z" fill="url(#tg)"/><path d="M503.5 475.5A7 7 0 1 1 515.5 466" fill="none" stroke="url(#tg)" stroke-width="3.2"/><path d="M509 490.5Q510 498.8 518 499.8Q510 500.8 509 509Q508 500.8 500 499.8Q508 498.8 509 490.5Z" fill="url(#tg)"/><circle cx="509" cy="529.5" r="5" fill="none" stroke="#e4e4e4" stroke-width="3.2"/><g stroke="#e4e4e4" stroke-width="2.8"><path d="M509 520.5V523M509 536V538.5M500 529.5H502.5M515.5 529.5H518M502.6 523.1L504.4 524.9M513.6 534.1L515.4 535.9M502.6 535.9L504.4 534.1M513.6 524.9L515.4 523.1"/></g><path d="M503 566L507.5 570.5L503 575M509.5 566L514 570.5L509.5 575" fill="none" stroke="#aaa" stroke-width="1.1"/></svg>
<div class="a" style="left:524px;top:85px;width:6px;height:498px;background:#1c1c1c"></div>
<div class="tab2" style="left:530px;top:85px;width:87px"></div><div class="t" style="left:535px;top:88px">Composition 1</div>
<div class="a" style="left:530px;top:107px;width:1058px;height:476px;background:#444"></div>
<div class="a" style="left:550px;top:127px;width:1038px;height:430px;background:#000"></div>
<div class="t" style="left:536px;top:108px;font-size:11px;color:#b8b8b8">px</div>
<svg style="left:530px;top:107px" width="1058" height="450" viewBox="530 107 1058 450"><path d="M554.8 119V127M566.2 123.5V127M577.7 123.5V127M589.1 123.5V127M600.5 123.5V127M611.9 119V127M623.3 123.5V127M634.7 123.5V127M646.1 123.5V127M657.6 123.5V127M669.0 119V127M680.4 123.5V127M691.8 123.5V127M703.2 123.5V127M714.6 123.5V127M726.0 119V127M737.5 123.5V127M748.9 123.5V127M760.3 123.5V127M771.7 123.5V127M783.1 119V127M794.5 123.5V127M806.0 123.5V127M817.4 123.5V127M828.8 123.5V127M840.2 119V127M851.6 123.5V127M863.0 123.5V127M874.4 123.5V127M885.9 123.5V127M897.3 119V127M908.7 123.5V127M920.1 123.5V127M931.5 123.5V127M942.9 123.5V127M954.4 119V127M965.8 123.5V127M977.2 123.5V127M988.6 123.5V127M1000.0 123.5V127M1011.4 119V127M1022.8 123.5V127M1034.3 123.5V127M1045.7 123.5V127M1057.1 123.5V127M1068.5 119V127M1079.9 123.5V127M1091.3 123.5V127M1102.7 123.5V127M1114.2 123.5V127M1125.6 119V127M1137.0 123.5V127M1148.4 123.5V127M1159.8 123.5V127M1171.2 123.5V127M1182.7 119V127M1194.1 123.5V127M1205.5 123.5V127M1216.9 123.5V127M1228.3 123.5V127M1239.7 119V127M1251.1 123.5V127M1262.6 123.5V127M1274.0 123.5V127M1285.4 123.5V127M1296.8 119V127M1308.2 123.5V127M1319.6 123.5V127M1331.0 123.5V127M1342.5 123.5V127M1353.9 119V127M1365.3 123.5V127M1376.7 123.5V127M1388.1 123.5V127M1399.5 123.5V127M1411.0 119V127M1422.4 123.5V127M1433.8 123.5V127M1445.2 123.5V127M1456.6 123.5V127M1468.0 119V127M1479.4 123.5V127M1490.9 123.5V127M1502.3 123.5V127M1513.7 123.5V127M1525.1 119V127M1536.5 123.5V127M1547.9 123.5V127M1559.3 123.5V127M1570.8 123.5V127M1582.2 119V127M546 547.5H550M546 536.1H550M546 524.6H550M541 513.2H550M546 501.8H550M546 490.4H550M546 479.0H550M546 467.6H550M541 456.1H550M546 444.7H550M546 433.3H550M546 421.9H550M546 410.5H550M541 399.1H550M546 387.7H550M546 376.2H550M546 364.8H550M546 353.4H550M541 342.0H550M546 330.6H550M546 319.2H550M546 307.8H550M546 296.3H550M541 284.9H550M546 273.5H550M546 262.1H550M546 250.7H550M546 239.3H550M541 227.8H550M546 216.4H550M546 205.0H550M546 193.6H550M546 182.2H550M541 170.8H550M546 159.4H550M546 147.9H550M546 136.5H550" stroke="#8c8c8c" stroke-width="1" fill="none"/></svg>
<div class="t" style="left:582.9px;top:105px;width:60px;text-align:center;font-size:11px;color:#b8b8b8">-1200</div>
<div class="t" style="left:640.0px;top:105px;width:60px;text-align:center;font-size:11px;color:#b8b8b8">-1050</div>
<div class="t" style="left:697.0px;top:105px;width:60px;text-align:center;font-size:11px;color:#b8b8b8">-900</div>
<div class="t" style="left:754.1px;top:105px;width:60px;text-align:center;font-size:11px;color:#b8b8b8">-750</div>
<div class="t" style="left:811.2px;top:105px;width:60px;text-align:center;font-size:11px;color:#b8b8b8">-600</div>
<div class="t" style="left:868.3px;top:105px;width:60px;text-align:center;font-size:11px;color:#b8b8b8">-450</div>
<div class="t" style="left:925.4px;top:105px;width:60px;text-align:center;font-size:11px;color:#b8b8b8">-300</div>
<div class="t" style="left:982.4px;top:105px;width:60px;text-align:center;font-size:11px;color:#b8b8b8">-150</div>
<div class="t" style="left:1039.5px;top:105px;width:60px;text-align:center;font-size:11px;color:#b8b8b8">0</div>
<div class="t" style="left:1096.6px;top:105px;width:60px;text-align:center;font-size:11px;color:#b8b8b8">150</div>
<div class="t" style="left:1153.7px;top:105px;width:60px;text-align:center;font-size:11px;color:#b8b8b8">300</div>
<div class="t" style="left:1210.7px;top:105px;width:60px;text-align:center;font-size:11px;color:#b8b8b8">450</div>
<div class="t" style="left:1267.8px;top:105px;width:60px;text-align:center;font-size:11px;color:#b8b8b8">600</div>
<div class="t" style="left:1324.9px;top:105px;width:60px;text-align:center;font-size:11px;color:#b8b8b8">750</div>
<div class="t" style="left:1382.0px;top:105px;width:60px;text-align:center;font-size:11px;color:#b8b8b8">900</div>
<div class="t" style="left:1439.0px;top:105px;width:60px;text-align:center;font-size:11px;color:#b8b8b8">1050</div>
<div class="t" style="left:1496.1px;top:105px;width:60px;text-align:center;font-size:11px;color:#b8b8b8">1200</div>
<div class="t" style="left:1570.7px;top:105px;font-size:11px;color:#b8b8b8;width:18px;overflow:hidden">135</div>
<div class="t" style="left:507px;top:504.2px;width:60px;text-align:center;font-size:11px;color:#b8b8b8;transform:rotate(-90deg) scaleX(.93)">-450</div>
<div class="t" style="left:507px;top:447.1px;width:60px;text-align:center;font-size:11px;color:#b8b8b8;transform:rotate(-90deg) scaleX(.93)">-300</div>
<div class="t" style="left:507px;top:390.1px;width:60px;text-align:center;font-size:11px;color:#b8b8b8;transform:rotate(-90deg) scaleX(.93)">-150</div>
<div class="t" style="left:507px;top:333.0px;width:60px;text-align:center;font-size:11px;color:#b8b8b8;transform:rotate(-90deg) scaleX(.93)">0</div>
<div class="t" style="left:507px;top:275.9px;width:60px;text-align:center;font-size:11px;color:#b8b8b8;transform:rotate(-90deg) scaleX(.93)">150</div>
<div class="t" style="left:507px;top:218.8px;width:60px;text-align:center;font-size:11px;color:#b8b8b8;transform:rotate(-90deg) scaleX(.93)">300</div>
<div class="t" style="left:507px;top:161.8px;width:60px;text-align:center;font-size:11px;color:#b8b8b8;transform:rotate(-90deg) scaleX(.93)">450</div>
<svg style="left:550px;top:127px" width="1038" height="430" viewBox="550 127 1038 430"><rect x="703.5" y="137" width="729.5" height="410.3" fill="#fff"/><path d="M612.5 127V557M662.5 127V557M1473.5 127V557M1523.5 127V557M933.5 127V557M1203.5 127V557M612.5 207.5H1523.5M612.5 477.5H1523.5" stroke="#4c4c4c" stroke-width="1" fill="none"/><path d="M933.5 137V547.3M1203.5 137V547.3M703.5 207H1433M703.5 477H1433" stroke="#111" stroke-width="2.4" fill="none"/><rect x="935.3" y="208.8" width="266.4" height="266.4" fill="#5a5a5a" stroke="#2a2a2a" stroke-width="1"/><rect x="936" y="209.5" width="265" height="265" rx="27" fill="#00fdc8" stroke="#1a1a1a" stroke-width="1"/><rect x="1067.7" y="341.2" width="1.3" height="1.3" fill="#666"/></svg>
<div class="t" style="left:569px;top:458.5px;font-size:12.6px;color:#f4f4f4;">Hold S <span style="color:rgba(138,138,138,.5)">Direct Layer Selection</span></div>
<div class="t" style="left:569px;top:472.5px;font-size:12.6px;color:#f4f4f4;">Space <span style="color:rgba(138,138,138,.5)">Play/ Stop</span></div>
<div class="t" style="left:569px;top:486.5px;font-size:12.6px;color:#f4f4f4;">Space + click + drag <span style="color:rgba(138,138,138,.5)">Pan</span></div>
<div class="t" style="left:569px;top:500.5px;font-size:12.6px;color:#f4f4f4;">Alt + click + drag <span style="color:rgba(138,138,138,.5)">Move Pivot Point</span></div>
<div class="t" style="left:569px;top:514.5px;font-size:12.6px;color:#f4f4f4;">Shift <span style="color:rgba(138,138,138,.5)">Enable Snapping</span></div>
<div class="t" style="left:998px;top:534px;font-size:13.1px;color:#111;">Viewport Quality: High</div>
<div class="cmb" style="left:535px;top:560px;width:78px;height:18px;background:#2e2e2e;border-color:#3a3a3a"></div><div class="t" style="left:538px;top:560.7px">38%</div><svg style="left:600px;top:566px" width="9" height="6" viewBox="0 0 9 6"><path d="M0.5 0.8L4.5 4.8L8.5 0.8" fill="none" stroke="#d0d0d0" stroke-width="1.1"/></svg>
<div class="a" style="left:490px;top:580px;width:1104px;height:7px;background:#1c1c1c"></div>
<div class="a" style="left:866.5px;top:559.5px;width:99px;height:19px;background:#2c2c2c;border-radius:4px;border:1px solid #262626"></div>
<div class="a" style="left:885.8px;top:560px;width:1px;height:18px;background:#3a3a3a"></div>
<div class="a" style="left:905.7px;top:560px;width:1px;height:18px;background:#3a3a3a"></div>
<div class="a" style="left:925.6px;top:560px;width:1px;height:18px;background:#3a3a3a"></div>
<div class="a" style="left:945.5px;top:560px;width:1px;height:18px;background:#3a3a3a"></div>
<div class="a" style="left:971.5px;top:559.5px;width:19.5px;height:19px;background:#2c2c2c;border-radius:4px;border:1px solid #262626"></div>
<svg style="left:866px;top:559px" width="126" height="20" viewBox="866 559 126 20"><g fill="#c8c8c8"><rect x="869.8" y="563.9" width="2" height="10.2"/><path d="M873.7 569L880.8 564.2V574Z"/><path d="M890.5 569L898 564.2V574Z"/><rect x="900.2" y="563.9" width="1.9" height="10.2"/><path d="M910.9 563.9V574.1L919.8 569Z"/><rect x="930" y="563.9" width="2" height="10.2"/><path d="M933.9 564.2V574L941.3 569Z"/><path d="M951.1 564.2V574L958.1 569Z"/><rect x="960.1" y="563.9" width="1.9" height="10.2"/><path d="M981.6 563V568.4L986.4 565.8Z"/></g><path d="M981 566.3H975.3Q974.2 566.3 974.2 567.4V571.4Q974.2 572.5 975.3 572.5H986.3Q987.4 572.5 987.4 571.4V567.2" fill="none" stroke="#c8c8c8" stroke-width="1.2"/></svg>
<div class="fld" style="left:1232px;top:560px;width:37px;height:18px;background:#2a2a2a"></div>
<svg style="left:1233px;top:565px" width="14" height="8" viewBox="0 0 14 8"><path d="M0 4L3.5 0H14V8H3.5Z" fill="#e0e0e0"/><circle cx="3.8" cy="4" r="1.2" fill="#2a2a2a"/></svg>
<div class="t" style="left:1257px;top:560px;color:#8c8c8c">0</div>
<div class="a" style="left:1272.5px;top:560px;width:30.799999999999955px;height:18px;background:#2a2a2a;border-radius:4px;border:1px solid #262626"></div><div class="a" style="left:1272.5px;top:560px;width:18.5px;height:18px;background:#2e2e2e;border-radius:4px 0 0 4px;border:1px solid #262626"></div><svg style="left:1294.15px;top:565.5px" width="6" height="7" viewBox="0 0 6 7"><path d="M0.6 0.6V6.4L5.4 3.5Z" fill="none" stroke="#9a9a9a" stroke-width="0.9"/></svg><svg style="left:1272.5px;top:560px" width="18.5" height="18" viewBox="0 0 18.5 18"><path d="M3.5 6.8H6L9.8 3.5V14.5L6 11.2H3.5Z" fill="#35d070"/><path d="M11.6 6.3Q13.2 9 11.6 11.7M13.4 4.5Q16 9 13.4 13.5" fill="none" stroke="#35d070" stroke-width="1.2"/></svg>
<div class="a" style="left:1307.5px;top:560px;width:30.5px;height:18px;background:#2a2a2a;border-radius:4px;border:1px solid #262626"></div><div class="a" style="left:1307.5px;top:560px;width:18.299999999999955px;height:18px;background:#363636;border-radius:4px 0 0 4px;border:1px solid #262626"></div><svg style="left:1328.9px;top:565.5px" width="6" height="7" viewBox="0 0 6 7"><path d="M0.6 0.6V6.4L5.4 3.5Z" fill="none" stroke="#9a9a9a" stroke-width="0.9"/></svg><svg style="left:1307.5px;top:560px" width="18.299999999999955" height="18" viewBox="0 0 18.5 18"><path d="M6.2 14L4.3 9.5Q3 5.2 8 4.3Q12.5 3.8 14.8 8" fill="none" stroke="#ddd" stroke-width="2.2"/><path d="M4.2 12.8L7.6 11.6M12.8 8.6L16 7.4" stroke="#333" stroke-width="0.9"/></svg>
<div class="a" style="left:1342.6px;top:560px;width:30.40000000000009px;height:18px;background:#2a2a2a;border-radius:4px;border:1px solid #262626"></div><div class="a" style="left:1342.6px;top:560px;width:18.40000000000009px;height:18px;background:#404040;border-radius:4px 0 0 4px;border:1px solid #262626"></div><svg style="left:1364.0px;top:565.5px" width="6" height="7" viewBox="0 0 6 7"><path d="M0.6 0.6V6.4L5.4 3.5Z" fill="none" stroke="#9a9a9a" stroke-width="0.9"/></svg><svg style="left:1342.6px;top:560px" width="18.40000000000009" height="18" viewBox="0 0 18.5 18"><path d="M6.3 2.5V15.5M12 2.5V15.5M2.5 6.2H16M2.5 11.8H16" stroke="#e4e4e4" stroke-width="1.1"/></svg>
<div class="a" style="left:1377.2px;top:560px;width:19.299999999999955px;height:18px;background:#2a2a2a;border-radius:4px;border:1px solid #262626"></div><svg style="left:1377.2px;top:560px" width="19.299999999999955" height="18" viewBox="0 0 18.5 18"><rect x="3" y="3.5" width="3.2" height="11.5" fill="#35d070"/><rect x="7.8" y="4" width="7.6" height="4.6" fill="none" stroke="#35d070" stroke-width="1.1"/><rect x="7.3" y="10.8" width="8.7" height="4.2" fill="#35d070"/></svg>
<div class="a" style="left:1400.8px;top:560px;width:18.5px;height:18px;background:#363636;border-radius:4px;border:1px solid #262626"></div><svg style="left:1400.8px;top:560px" width="18.5" height="18" viewBox="0 0 18.5 18"><path d="M3.2 4.5L7 9L3.2 13.5H5L8.8 9L5 4.5ZM7.4 4.5L11.2 9L7.4 13.5H9.2L13 9L9.2 4.5ZM11.6 4.5L15.4 9L11.6 13.5H13.4L17.2 9L13.4 4.5Z" fill="#d8d8d8"/></svg>
<div class="a" style="left:1423.5px;top:560px;width:30.799999999999955px;height:18px;background:#2a2a2a;border-radius:4px;border:1px solid #262626"></div><div class="a" style="left:1423.5px;top:560px;width:18.700000000000045px;height:18px;background:#363636;border-radius:4px 0 0 4px;border:1px solid #262626"></div><svg style="left:1445.25px;top:565.5px" width="6" height="7" viewBox="0 0 6 7"><path d="M0.6 0.6V6.4L5.4 3.5Z" fill="none" stroke="#9a9a9a" stroke-width="0.9"/></svg><svg style="left:1423.5px;top:560px" width="18.700000000000045" height="18" viewBox="0 0 18.5 18"><rect x="3.2" y="3.8" width="12.2" height="10.6" fill="none" stroke="#ddd" stroke-width="1.2"/><rect x="3.2" y="12" width="12.2" height="2.6" fill="#ddd"/></svg>
<div class="a" style="left:1458.6px;top:560px;width:30.600000000000136px;height:18px;background:#2a2a2a;border-radius:4px;border:1px solid #262626"></div><div class="a" style="left:1458.6px;top:560px;width:18.40000000000009px;height:18px;background:#363636;border-radius:4px 0 0 4px;border:1px solid #262626"></div><svg style="left:1480.1px;top:565.5px" width="6" height="7" viewBox="0 0 6 7"><path d="M0.6 0.6V6.4L5.4 3.5Z" fill="none" stroke="#9a9a9a" stroke-width="0.9"/></svg><svg style="left:1458.6px;top:560px" width="18.40000000000009" height="18" viewBox="0 0 18.5 18"><rect x="3.3" y="3.5" width="7" height="5" fill="none" stroke="#aaa" stroke-width="1"/><path d="M12.4 6V10.6H5.6M14.4 8.2V12.8H7.8M16.4 10.4V15H10" fill="none" stroke="#777" stroke-width="1"/></svg>
<div class="a" style="left:1493.5px;top:560px;width:30.799999999999955px;height:18px;background:#2a2a2a;border-radius:4px;border:1px solid #262626"></div><div class="a" style="left:1493.5px;top:560px;width:18.5px;height:18px;background:#363636;border-radius:4px 0 0 4px;border:1px solid #262626"></div><svg style="left:1515.15px;top:565.5px" width="6" height="7" viewBox="0 0 6 7"><path d="M0.6 0.6V6.4L5.4 3.5Z" fill="none" stroke="#9a9a9a" stroke-width="0.9"/></svg><svg style="left:1493.5px;top:560px" width="18.5" height="18" viewBox="0 0 18.5 18"><rect x="2.8" y="2.8" width="8.2" height="8.2" fill="#c8c8c8"/><rect x="8" y="7.6" width="7.6" height="7.6" fill="#333" stroke="#ddd" stroke-width="1.1"/></svg>
<div class="a" style="left:1528.5px;top:560px;width:30.90000000000009px;height:18px;background:#2a2a2a;border-radius:4px;border:1px solid #262626"></div><div class="a" style="left:1528.5px;top:560px;width:18.700000000000045px;height:18px;background:#2e2e2e;border-radius:4px 0 0 4px;border:1px solid #262626"></div><svg style="left:1550.3000000000002px;top:565.5px" width="6" height="7" viewBox="0 0 6 7"><path d="M0.6 0.6V6.4L5.4 3.5Z" fill="none" stroke="#9a9a9a" stroke-width="0.9"/></svg><svg style="left:1528.5px;top:560px" width="18.700000000000045" height="18" viewBox="0 0 18.5 18"><rect x="3.6" y="3.2" width="2.4" height="2.4" fill="#35d070"/><rect x="3.6" y="8.0" width="2.4" height="2.4" fill="#35d070"/><rect x="3.6" y="12.8" width="2.4" height="2.4" fill="#35d070"/><rect x="6.0" y="5.6" width="2.4" height="2.4" fill="#35d070"/><rect x="6.0" y="10.399999999999999" width="2.4" height="2.4" fill="#35d070"/><rect x="8.4" y="3.2" width="2.4" height="2.4" fill="#35d070"/><rect x="8.4" y="8.0" width="2.4" height="2.4" fill="#35d070"/><rect x="8.4" y="12.8" width="2.4" height="2.4" fill="#35d070"/><rect x="10.799999999999999" y="5.6" width="2.4" height="2.4" fill="#35d070"/><rect x="10.799999999999999" y="10.399999999999999" width="2.4" height="2.4" fill="#35d070"/><rect x="13.2" y="3.2" width="2.4" height="2.4" fill="#35d070"/><rect x="13.2" y="8.0" width="2.4" height="2.4" fill="#35d070"/><rect x="13.2" y="12.8" width="2.4" height="2.4" fill="#35d070"/></svg>
<div class="a" style="left:1563.6px;top:560px;width:18.40000000000009px;height:18px;background:#2a2a2a;border-radius:4px;border:1px solid #262626"></div><svg style="left:1563.6px;top:560px" width="18.40000000000009" height="18" viewBox="0 0 18.5 18"><circle cx="9.2" cy="9" r="4" fill="none" stroke="#e4e4e4" stroke-width="2.6"/><g stroke="#e4e4e4" stroke-width="2.4"><path d="M9.2 1.8V4M9.2 14V16.2M2 9H4.2M14.2 9H16.4M4.1 3.9L5.6 5.4M12.8 12.6L14.3 14.1M4.1 14.1L5.6 12.6M12.8 5.4L14.3 3.9"/></g></svg>
<div class="a" style="left:1593px;top:85px;width:321px;height:22px;background:#1c1c1c"></div>
<div class="tab2" style="left:1593px;top:85px;width:40px"></div><div class="t" style="left:1598px;top:88px">Color</div>
<div class="tab" style="left:1634px;top:86px;width:70px;height:21px;background:#2c2c2c"></div><div class="t" style="left:1639px;top:88px">Add Layers</div>
<div class="a" style="left:1593px;top:107px;width:321px;height:377px;background:#444"></div>
<div class="a" style="left:1900px;top:107px;width:14px;height:377px;background:#2e2e2e"></div><div class="a" style="left:1902.5px;top:109px;width:9.5px;height:301px;border-radius:5px;background:#555"></div>
<div class="a" style="left:1645.7px;top:120px;width:200px;height:200px;border-radius:50%;background:conic-gradient(from 0deg,hsl(90,100%,50%),hsl(60,100%,50%) 30deg,hsl(0,100%,50%) 90deg,hsl(300,100%,50%) 150deg,hsl(240,100%,50%) 210deg,hsl(180,100%,50%) 270deg,hsl(120,100%,50%) 330deg,hsl(90,100%,50%) 360deg)"></div>
<div class="a" style="left:1670.7px;top:145px;width:150px;height:150px;border-radius:50%;background:#444"></div>
<div class="a" style="left:1701.7px;top:176px;width:90.6px;height:90px;background:linear-gradient(to right,#000,rgba(0,0,0,0)),linear-gradient(to bottom,#fff,#f00)"></div>
<div class="a" style="left:1738.8px;top:169.8px;width:12.4px;height:12.4px;border-radius:50%;border:1.2px solid #eee"></div>
<div class="a" style="left:1826.8px;top:213.8px;width:12.4px;height:12.4px;border-radius:50%;border:1.2px solid #fff"></div>
<div class="a" style="left:1600px;top:333px;width:21.5px;height:22px;border-radius:3px;background:#7a7a7a"></div><div class="t" style="left:1625px;top:336.5px">Gray</div>
<div class="btn" style="left:1871px;top:333px;width:22px;height:22px;background:#2a2a2a;border-color:#262626"></div>
<svg style="left:1875px;top:337px" width="14" height="14" viewBox="0 0 14 14"><path d="M1 13L2 10.5L8 4.5L9.5 6L3.5 12Z" fill="none" stroke="#ddd" stroke-width="1"/><path d="M8 3L11 6M9 4.5L11.2 2.2Q12.5 1 13 2.5Q13.2 3.2 12 4.2L10 6" fill="#ddd" stroke="#ddd" stroke-width="1.4"/></svg>
<div class="cmb" style="left:1600px;top:360px;width:49.5px;height:18px"></div><div class="t" style="left:1603px;top:361px">Hex</div><svg style="left:1636px;top:366px" width="9" height="6" viewBox="0 0 9 6"><path d="M0.5 0.8L4.5 4.8L8.5 0.8" fill="none" stroke="#d0d0d0" stroke-width="1.1"/></svg>
<div class="fld" style="left:1653px;top:358px;width:240px;height:22px;background:#2a2a2a"></div><div class="t" style="left:1658px;top:361px;color:#666">#</div><div class="t" style="left:1670px;top:361px">7a7a7a</div>
<div class="a" style="left:1600px;top:390.5px;width:234px;height:3px;border-radius:2px;background:#f0f0f0"></div><div class="a" style="left:1828.9px;top:386.5px;width:11px;height:11px;border-radius:50%;background:#4fae92;border:2.5px solid #84d6be"></div>
<div class="fld" style="left:1849px;top:384.5px;width:44px;height:15.5px;background:#2a2a2a"></div><div class="t" style="left:1853px;top:383.5px;color:#5c5c5c">A</div><div class="t" style="left:1866px;top:383.5px">255</div>
<div class="a" style="left:1597px;top:406px;width:299px;height:22px;background:#262626"></div>
<div class="a" style="left:1599px;top:408px;width:148px;height:20px;background:#444;border-radius:4px 4px 0 0"></div>
<div class="t" style="left:1599px;top:409px;width:148px;text-align:center">Swatches</div><div class="t" style="left:1747px;top:409px;width:148px;text-align:center;color:#bdbdbd">Generator</div>
<div class="a" style="left:1598.3px;top:431.8px;width:257px;height:17.4px;background:#5a5a5a;border-radius:4px"></div>
<div class="a" style="left:1599.3px;top:432.6px;width:62px;height:15.8px;background:#222;border-radius:3px"></div>
<svg style="left:1605.5px;top:436px" width="11" height="9" viewBox="0 0 11 9"><path d="M1 0V9M4 0V9" stroke="#35d070" stroke-width="1.5"/><path d="M6.3 0.3L9.8 8.8" stroke="#35d070" stroke-width="1.6"/></svg>
<div class="t" style="left:1621.5px;top:431.5px">Library</div>
<svg style="left:1670.5px;top:435.5px" width="11" height="10" viewBox="0 0 11 10"><path d="M0.5 0.5H4L5 2H10.5V9.5H0.5Z" fill="#ddd"/><path d="M2 4.2H3M4.2 4.2H9M2 6.6H3M4.2 6.6H9" stroke="#555" stroke-width="1.1"/></svg>
<div class="t" style="left:1686.5px;top:431.5px">Project</div>
<svg style="left:1737.5px;top:435px" width="9" height="11" viewBox="0 0 9 11"><path d="M0.6 0.6H5.2L8.4 3.8V10.4H0.6Z" fill="none" stroke="#ddd" stroke-width="1.1"/><path d="M5 0.8V4H8.2" fill="none" stroke="#ddd" stroke-width="1"/></svg>
<div class="t" style="left:1752px;top:431.5px">Scene</div>
<svg style="left:1800.5px;top:435.5px" width="11" height="10" viewBox="0 0 11 10"><path d="M2.5 0.6H8Q10.4 0.6 10.4 3V5.5L6 9.4H3Q0.6 9.4 0.6 7V2.5Q0.6 0.6 2.5 0.6Z" fill="none" stroke="#ddd" stroke-width="1.1"/><path d="M10.2 5.5H7.5Q6 5.5 6 7V9.2" fill="none" stroke="#ddd" stroke-width="1"/></svg>
<div class="t" style="left:1816px;top:431.5px">Labels</div>
<div class="a" style="left:1858px;top:431.8px;width:36.5px;height:17.4px;background:#5a5a5a;border-radius:4px"></div><div class="a" style="left:1859px;top:432.6px;width:16.5px;height:15.8px;background:#222;border-radius:3px"></div>
<svg style="left:1862.5px;top:436px" width="10" height="10" viewBox="0 0 10 10"><g fill="#35d070"><rect x="0.5" y="0.5" width="3.3" height="3.3"/><rect x="5.7" y="0.5" width="3.3" height="3.3"/><rect x="0.5" y="5.7" width="3.3" height="3.3"/><rect x="5.7" y="5.7" width="3.3" height="3.3"/></g></svg>
<svg style="left:1881px;top:436px" width="11" height="9" viewBox="0 0 11 9"><path d="M0 1H11M0 4.5H11M0 8H11" stroke="#e0e0e0" stroke-width="1"/></svg>
<div class="cmb" style="left:1598.3px;top:452.5px;width:275.5px;height:17px"></div><div class="t" style="left:1601px;top:453px">new</div><svg style="left:1860.5px;top:458.5px" width="9" height="6" viewBox="0 0 9 6"><path d="M0.5 0.8L4.5 4.8L8.5 0.8" fill="none" stroke="#d0d0d0" stroke-width="1.1"/></svg>
<div class="a" style="left:1881px;top:460px;width:2px;height:2px;background:#e0e0e0"></div>
<div class="a" style="left:1886px;top:460px;width:2px;height:2px;background:#e0e0e0"></div>
<div class="a" style="left:1891px;top:460px;width:2px;height:2px;background:#e0e0e0"></div>
<div class="a" style="left:1598px;top:470px;width:298px;height:14px;background:#262626"></div>
<div class="a" style="left:1600.2px;top:472px;width:18px;height:12px;border-radius:3px 3px 0 0;background:#9b50f8"></div>
<div class="a" style="left:1622.2px;top:472px;width:18px;height:12px;border-radius:3px 3px 0 0;background:#4a9ff8"></div>
<div class="a" style="left:1644.1px;top:472px;width:18px;height:12px;border-radius:3px 3px 0 0;background:#ff7450"></div>
<div class="a" style="left:1666.1px;top:472px;width:18px;height:12px;border-radius:3px 3px 0 0;background:#4ef8ae"></div>
<div class="a" style="left:1688.1px;top:472px;width:18px;height:12px;border-radius:3px 3px 0 0;background:#f84a60"></div>
<div class="a" style="left:1710.0px;top:472px;width:18px;height:12px;border-radius:3px 3px 0 0;background:#f848b8"></div>
<div class="a" style="left:1732.0px;top:472px;width:18px;height:12px;border-radius:3px 3px 0 0;background:#ffd050"></div>
<div class="a" style="left:1754.0px;top:472px;width:18px;height:12px;border-radius:3px 3px 0 0;background:#3a62d8"></div>
<div class="a" style="left:1776.0px;top:472px;width:18px;height:12px;border-radius:3px 3px 0 0;background:#58e0d0"></div>
<div class="a" style="left:1797.9px;top:472px;width:18px;height:12px;border-radius:3px 3px 0 0;background:#d880d8"></div>
<div class="a" style="left:1819.9px;top:472px;width:18px;height:12px;border-radius:3px 3px 0 0;background:#b0ea90"></div>
<div class="a" style="left:1841.9px;top:472px;width:18px;height:12px;border-radius:3px 3px 0 0;background:#6a50f8"></div>
<div class="a" style="left:1593px;top:484px;width:321px;height:6.5px;background:#1c1c1c"></div>
<div class="a" style="left:1593px;top:490.5px;width:321px;height:21.5px;background:#1c1c1c"></div>
<div class="tab2" style="left:1593px;top:490.5px;width:38px;height:21.5px"></div><div class="t" style="left:1598px;top:492.5px">Align</div>
<div class="a" style="left:1593px;top:512px;width:321px;height:68px;background:#444"></div>
<div class="t" style="left:1601px;top:523px">Alignment</div><div class="t" style="left:1601px;top:551px">Distribution</div>
<div class="a" style="left:1790.4px;top:522.4px;width:53.2px;height:17.5px;background:#202020;border-radius:4px;border:1px solid #2c2c2c"></div><svg style="left:1790.4px;top:522.4px" width="17.7" height="17.5" viewBox="0 0 18 17.5"><path d="M2.5 2.5V14.5" stroke="#f0f0f0" stroke-width="1.1"/><path d="M4.5 6.2H10M4.5 11H13.5" stroke="#f0f0f0" stroke-width="1.7"/></svg><div class="a" style="left:1807.6px;top:522.4px;width:1px;height:17.5px;background:#3c3c3c"></div><svg style="left:1808.1px;top:522.4px" width="17.7" height="17.5" viewBox="0 0 18 17.5"><path d="M9 2V15" stroke="#f0f0f0" stroke-width="1.1"/><path d="M5.5 6.2H12.5M3.5 11H14.5" stroke="#f0f0f0" stroke-width="1.7"/></svg><div class="a" style="left:1825.3px;top:522.4px;width:1px;height:17.5px;background:#3c3c3c"></div><svg style="left:1825.8px;top:522.4px" width="17.7" height="17.5" viewBox="0 0 18 17.5"><path d="M15.5 2.5V14.5" stroke="#f0f0f0" stroke-width="1.1"/><path d="M8 6.2H13.5M4.5 11H13.5" stroke="#f0f0f0" stroke-width="1.7"/></svg><div class="a" style="left:1852.2px;top:522.4px;width:53.2px;height:17.5px;background:#202020;border-radius:4px;border:1px solid #2c2c2c"></div><svg style="left:1852.2px;top:522.4px" width="17.7" height="17.5" viewBox="0 0 18 17.5"><path d="M2.5 3H15.5" stroke="#f0f0f0" stroke-width="1.1"/><path d="M6.5 5V14.5M11.5 5V10" stroke="#f0f0f0" stroke-width="1.7"/></svg><div class="a" style="left:1869.4px;top:522.4px;width:1px;height:17.5px;background:#3c3c3c"></div><svg style="left:1869.9px;top:522.4px" width="17.7" height="17.5" viewBox="0 0 18 17.5"><path d="M2 9H16" stroke="#f0f0f0" stroke-width="1.1"/><path d="M6.5 3V15M11.5 5.5V12.5" stroke="#f0f0f0" stroke-width="1.7"/></svg><div class="a" style="left:1887.1px;top:522.4px;width:1px;height:17.5px;background:#3c3c3c"></div><svg style="left:1887.6px;top:522.4px" width="17.7" height="17.5" viewBox="0 0 18 17.5"><path d="M2.5 15H15.5" stroke="#f0f0f0" stroke-width="1.1"/><path d="M6.5 8V13M11.5 3.5V13" stroke="#f0f0f0" stroke-width="1.7"/></svg><div class="a" style="left:1790.4px;top:550.4px;width:53.2px;height:17.5px;background:#202020;border-radius:4px;border:1px solid #2c2c2c"></div><svg style="left:1790.4px;top:550.4px" width="17.7" height="17.5" viewBox="0 0 18 17.5"><path d="M2.5 2.5V14.5M15 2.5V14.5" stroke="#f0f0f0" stroke-width="1.1"/><path d="M8.8 5V13" stroke="#f0f0f0" stroke-width="1.8"/></svg><div class="a" style="left:1807.6px;top:550.4px;width:1px;height:17.5px;background:#3c3c3c"></div><svg style="left:1808.1px;top:550.4px" width="17.7" height="17.5" viewBox="0 0 18 17.5"><path d="M2.5 2.5H15.5M2.5 14.5H15.5" stroke="#f0f0f0" stroke-width="1.1"/><path d="M5 8.6H13" stroke="#f0f0f0" stroke-width="1.8"/></svg><div class="a" style="left:1825.3px;top:550.4px;width:1px;height:17.5px;background:#3c3c3c"></div><svg style="left:1825.8px;top:550.4px" width="17.7" height="17.5" viewBox="0 0 18 17.5"><path d="M2 5V2.5H4.5M13.5 2.5H16V5M16 12V14.5H13.5M4.5 14.5H2V12" fill="none" stroke="#f0f0f0" stroke-width="1" stroke-dasharray="2 1"/><path d="M5.8 10V13M9 7.5V10.5M12.2 5V8" stroke="#f0f0f0" stroke-width="1.7"/></svg>
<div class="a" style="left:494px;top:586px;width:1420px;height:22px;background:#1c1c1c"></div>
<div class="tab" style="left:494px;top:586px;width:89px;height:22.5px;background:#3a3a3a"></div><div class="t" style="left:499px;top:588.5px">Scene Window</div>
<div class="tab" style="left:584px;top:586px;width:100px;height:22.5px;background:#232323"></div><div class="t" style="left:589px;top:588.5px">JavaScript Editor</div>
<div class="tab" style="left:685.5px;top:586px;width:111px;height:22.5px;background:#232323"></div><div class="t" style="left:690px;top:588.5px">Dependency Graph</div>
<div class="a" style="left:494px;top:608px;width:1420px;height:1.2px;background:#2fc468"></div>
<div class="a" style="left:494px;top:609.7px;width:1420px;height:391px;background:#2a2a2a"></div>
<div class="a" style="left:498.7px;top:610.4px;width:1410px;height:19.3px;background:#444;border-radius:3px 3px 0 0"></div>
<div class="t" style="left:1103px;top:610.5px;width:200px;text-align:center">Composition 1</div>
<div class="a" style="left:494px;top:629.7px;width:698px;height:24px;background:#3a3a3a"></div>
<div class="a" style="left:496.5px;top:632px;width:488px;height:19.5px;border-radius:10px;background:#262626"></div>
<svg style="left:500.5px;top:635.5px" width="14" height="14" viewBox="0 0 14 14"><circle cx="5.5" cy="5.5" r="4.5" fill="none" stroke="#e4e4e4" stroke-width="1"/><path d="M9.2 9.2L11.4 11.4" stroke="#e4e4e4" stroke-width="2" stroke-linecap="round"/></svg>
<div class="t g" style="left:520px;top:633.5px">Enter a layer name</div>
<div class="btn" style="left:987.4px;top:632.5px;width:19.5px;height:19px;background:#2a2a2a;border-color:#242424"></div><svg style="left:987.4px;top:632.5px" width="20" height="19" viewBox="0 0 20 19"><path d="M5 9.5H15M10 4.5V14.5" stroke="#eee" stroke-width="1.6"/><path d="M19 15V18H16Z" fill="#2fca6a"/></svg>
<div class="btn" style="left:1031.5px;top:632.5px;width:19.5px;height:19px;background:#2a2a2a;border-color:#242424"></div><svg style="left:1031.5px;top:632.5px" width="19.5" height="19" viewBox="0 0 19.5 19"><circle cx="7.5" cy="12" r="4.2" fill="#555"/><circle cx="9" cy="10.5" r="4.2" fill="#888"/><circle cx="11" cy="8" r="4.4" fill="#e0e0e0"/></svg>
<div class="btn" style="left:1053.2px;top:632.5px;width:19.5px;height:19px;background:#2a2a2a;border-color:#242424"></div><svg style="left:1053.2px;top:632.5px" width="19.5" height="19" viewBox="0 0 19.5 19"><g fill="#e0e0e0"><circle cx="5" cy="4.5" r="1"/><circle cx="11" cy="4" r="1"/><circle cx="4.5" cy="10.5" r="1"/><path d="M10.5 6.5L11.6 10L15 11L11.6 12L10.5 15.5L9.4 12L6 11L9.4 10Z"/></g><path d="M18.5 15V18H15.5Z" fill="#2fca6a"/></svg>
<div class="btn" style="left:1075px;top:632.5px;width:19.5px;height:19px;background:#2a2a2a;border-color:#242424"></div><svg style="left:1075px;top:632.5px" width="19.5" height="19" viewBox="0 0 19.5 19"><path d="M3.5 5H16M3.5 9.5H16M3.5 14H16" stroke="#ddd" stroke-width="1" stroke-dasharray="3 1.5"/><circle cx="12" cy="5" r="1.6" fill="#2a2a2a" stroke="#ddd"/><circle cx="7" cy="9.5" r="1.6" fill="#2a2a2a" stroke="#ddd"/><circle cx="11" cy="14" r="1.6" fill="#2a2a2a" stroke="#ddd"/><path d="M18.5 15V18H15.5Z" fill="#2fca6a"/></svg>
<div class="fld" style="left:1097.3px;top:632.3px;width:93.5px;height:19.2px;background:#2a2a2a"></div><div class="t" style="left:1101.5px;top:634px;color:#555">F</div><div class="t" style="left:1114px;top:634px">0</div>
<div class="a" style="left:494px;top:653.5px;width:698px;height:19px;background:#444"></div>
<svg style="left:500.5px;top:656.7px" width="9" height="12" viewBox="0 0 9 12"><path d="M2.2 5V3.2Q2.2 1 4.5 1Q6.8 1 6.8 3.2V5" fill="none" stroke="#ddd" stroke-width="1.2"/><rect x="0.5" y="5" width="8" height="6.5" rx="0.8" fill="#ddd"/><rect x="3.8" y="7" width="1.4" height="2.4" fill="#444"/></svg>
<svg style="left:517px;top:658.2px" width="14" height="9" viewBox="0 0 14 9"><path d="M0.6 4.5Q7 -3 13.4 4.5Q7 12 0.6 4.5Z" fill="none" stroke="#ddd" stroke-width="1.1"/><circle cx="7" cy="4.5" r="2" fill="none" stroke="#ddd" stroke-width="1.1"/></svg>
<svg style="left:537px;top:656.2px" width="12" height="13" viewBox="0 0 12 13"><path d="M6 0.8L11.3 3.6V9.6L6 12.4L0.7 9.6V3.6ZM0.7 3.6L6 6.4L11.3 3.6M6 6.4V12.4" fill="none" stroke="#ddd" stroke-width="1"/></svg>
<svg style="left:555.5px;top:657.2px" width="14" height="11" viewBox="0 0 14 11"><path d="M0.5 3.6H3L6.5 0.6V10.4L3 7.4H0.5Z" fill="#ddd"/><path d="M8.4 3Q10 5.5 8.4 8M10.4 1.2Q13.2 5.5 10.4 9.8" fill="none" stroke="#ddd" stroke-width="1.1"/></svg>
<svg style="left:575px;top:655.7px" width="14" height="14" viewBox="0 0 14 14"><path d="M1 13L2 10.5L8 4.5L9.5 6L3.5 12Z" fill="none" stroke="#ccc" stroke-width="1"/><path d="M8 3L11 6M9 4.5L11.2 2.2Q12.5 1 13 2.5Q13.2 3.2 12 4.2L10 6" fill="#ccc" stroke="#ccc" stroke-width="1.4"/></svg>
<svg style="left:593.3px;top:658.7px" width="14" height="8" viewBox="0 0 14 8"><path d="M0 4L3.5 0H14V8H3.5Z" fill="#e0e0e0"/><circle cx="3.8" cy="4" r="1.2" fill="#444"/></svg>
<div class="t" style="left:649.5px;top:655.5px">Name</div>
<div class="a" style="left:494px;top:672px;width:686px;height:22px;background:#373737"></div>
<div class="a" style="left:496.5px;top:674.3px;width:17px;height:17.4px;background:#2b2b2b"></div>
<div class="a" style="left:515px;top:674.3px;width:17.6px;height:17.4px;background:#2b2b2b;border-radius:3px"></div>
<svg style="left:517.5px;top:676.5px" width="13" height="13" viewBox="0 0 14 14"><path d="M12.2 6A5.3 5.3 0 1 1 9.5 2.3" fill="none" stroke="#e0e0e0" stroke-width="1.1"/><path d="M4.2 6.6L6.8 9.2L12.8 2.6" fill="none" stroke="#e0e0e0" stroke-width="1.3"/></svg>
<div class="a" style="left:573px;top:675px;width:16px;height:16px;border-radius:3px;background:#c8f07c"></div>
<svg style="left:593.3px;top:679px" width="14" height="8" viewBox="0 0 14 8"><path d="M0 4L3.5 0H14V8H3.5Z" fill="#e0e0e0"/><circle cx="3.8" cy="4" r="1.2" fill="#373737"/></svg>
<div class="a" style="left:652px;top:684px;width:3.8px;height:6px;background:#eee;opacity:1"></div><div class="a" style="left:655.8px;top:676px;width:3.3px;height:14px;background:#90e0a0;opacity:1"></div>
<div class="t" style="left:667px;top:674.5px">GridStrokeWidth</div>
<div class="a" style="left:494px;top:694px;width:686px;height:22px;background:#373737"></div>
<div class="a" style="left:494px;top:694.7px;width:686px;height:20.6px;background:#514c4a"></div>
<div class="a" style="left:496.5px;top:696.3px;width:17px;height:17.4px;background:#484442"></div>
<div class="a" style="left:515px;top:696.3px;width:17.6px;height:17.4px;background:#484442;border-radius:3px"></div>
<svg style="left:517.5px;top:698.5px" width="13" height="13" viewBox="0 0 14 14"><path d="M12.2 6A5.3 5.3 0 1 1 9.5 2.3" fill="none" stroke="#8c8c8c" stroke-width="1.1"/><path d="M4.2 6.6L6.8 9.2L12.8 2.6" fill="none" stroke="#8c8c8c" stroke-width="1.3"/></svg>
<div class="a" style="left:573px;top:697px;width:16px;height:16px;border-radius:3px;background:#b08464"></div>
<svg style="left:593.3px;top:701px" width="14" height="8" viewBox="0 0 14 8"><path d="M0 4L3.5 0H14V8H3.5Z" fill="#8c8c8c"/><circle cx="3.8" cy="4" r="1.2" fill="#514c4a"/></svg>
<svg style="left:652px;top:702px" width="8" height="6" viewBox="0 0 8 6"><path d="M0.5 1H7.5M0.5 5H7.5" stroke="#80a8d0" stroke-width="0.85"/></svg>
<div class="t" style="left:667px;top:696.5px;color:#9a9a9a;text-decoration:line-through">DivideToGetAverage</div>
<div class="a" style="left:494px;top:716px;width:686px;height:22px;background:#373737"></div>
<div class="a" style="left:496.5px;top:718.3px;width:17px;height:17.4px;background:#3a3838"></div>
<div class="a" style="left:515px;top:718.3px;width:17.6px;height:17.4px;background:#3a3838;border-radius:3px"></div>
<svg style="left:517.5px;top:720.5px" width="13" height="13" viewBox="0 0 14 14"><path d="M12.2 6A5.3 5.3 0 1 1 9.5 2.3" fill="none" stroke="#8c8c8c" stroke-width="1.1"/><path d="M4.2 6.6L6.8 9.2L12.8 2.6" fill="none" stroke="#8c8c8c" stroke-width="1.3"/></svg>
<div class="a" style="left:573px;top:719px;width:16px;height:16px;border-radius:3px;background:#a07258"></div>
<svg style="left:593.3px;top:723px" width="14" height="8" viewBox="0 0 14 8"><path d="M0 4L3.5 0H14V8H3.5Z" fill="#8c8c8c"/><circle cx="3.8" cy="4" r="1.2" fill="#373737"/></svg>
<svg style="left:652px;top:724px" width="8" height="6" viewBox="0 0 8 6"><path d="M0.5 1H7.5M0.5 5H7.5" stroke="#80a8d0" stroke-width="0.85"/></svg>
<div class="t" style="left:667px;top:718.5px;color:#9a9a9a;text-decoration:line-through">AddGridSizes</div>
<div class="a" style="left:494px;top:738px;width:686px;height:22px;background:#373737"></div>
<div class="a" style="left:494px;top:738.7px;width:686px;height:20.6px;background:#50553f"></div>
<div class="a" style="left:496.5px;top:740.3px;width:17px;height:17.4px;background:#2b2b2b"></div>
<div class="a" style="left:515px;top:740.3px;width:17.6px;height:17.4px;background:#2b2b2b;border-radius:3px"></div>
<svg style="left:517.5px;top:742.5px" width="13" height="13" viewBox="0 0 14 14"><path d="M12.2 6A5.3 5.3 0 1 1 9.5 2.3" fill="none" stroke="#e0e0e0" stroke-width="1.1"/><path d="M4.2 6.6L6.8 9.2L12.8 2.6" fill="none" stroke="#e0e0e0" stroke-width="1.3"/></svg>
<div class="a" style="left:573px;top:741px;width:16px;height:16px;border-radius:3px;background:#c8f07c"></div>
<svg style="left:593.3px;top:745px" width="14" height="8" viewBox="0 0 14 8"><path d="M0 4L3.5 0H14V8H3.5Z" fill="#e0e0e0"/><circle cx="3.8" cy="4" r="1.2" fill="#50553f"/></svg>
<div class="a" style="left:652px;top:750px;width:3.8px;height:6px;background:#eee;opacity:1"></div><div class="a" style="left:655.8px;top:742px;width:3.3px;height:14px;background:#90e0a0;opacity:1"></div>
<div class="t" style="left:667px;top:740.5px">SquareSize</div>
<div class="a" style="left:494px;top:760px;width:686px;height:22px;background:#373737"></div>
<div class="a" style="left:496.5px;top:762.3px;width:17px;height:17.4px;background:#2b2b2b"></div>
<div class="a" style="left:515px;top:762.3px;width:17.6px;height:17.4px;background:#2b2b2b;border-radius:3px"></div>
<svg style="left:517px;top:766.5px" width="14" height="9" viewBox="0 0 14 9"><path d="M0.6 4.5Q7 -3 13.4 4.5Q7 12 0.6 4.5Z" fill="none" stroke="#ddd" stroke-width="1.1"/><circle cx="7" cy="4.5" r="2" fill="none" stroke="#ddd" stroke-width="1.1"/></svg>
<div class="a" style="left:534.5px;top:762.3px;width:17px;height:17.4px;background:#2b2b2b"></div>
<div class="a" style="left:573px;top:763px;width:16px;height:16px;border-radius:3px;background:#ffe87c"></div>
<svg style="left:593.3px;top:767px" width="14" height="8" viewBox="0 0 14 8"><path d="M0 4L3.5 0H14V8H3.5Z" fill="#e0e0e0"/><circle cx="3.8" cy="4" r="1.2" fill="#373737"/></svg>
<svg style="left:648.5px;top:764.5px" width="13" height="13" viewBox="0 0 13 13"><path d="M3.5 1H9.5M3.5 12H9.5M1 3.5V9.5M12 3.5V9.5" stroke="#f0e060" stroke-width="1.1"/><g fill="#eee"><rect x="0.2" y="0.2" width="1.8" height="1.8"/><rect x="11" y="0.2" width="1.8" height="1.8"/><rect x="0.2" y="11" width="1.8" height="1.8"/><rect x="11" y="11" width="1.8" height="1.8"/></g></svg>
<div class="t" style="left:667px;top:762.5px">SquaresOnShape</div>
<div class="a" style="left:494px;top:782px;width:686px;height:22px;background:#373737"></div>
<div class="a" style="left:496.5px;top:784.3px;width:17px;height:17.4px;background:#2b2b2b"></div>
<div class="a" style="left:515px;top:784.3px;width:17.6px;height:17.4px;background:#2b2b2b;border-radius:3px"></div>
<svg style="left:517px;top:788.5px" width="14" height="9" viewBox="0 0 14 9"><path d="M0.6 4.5Q7 -3 13.4 4.5Q7 12 0.6 4.5Z" fill="none" stroke="#ddd" stroke-width="1.1"/><circle cx="7" cy="4.5" r="2" fill="none" stroke="#ddd" stroke-width="1.1"/></svg>
<div class="a" style="left:534.5px;top:784.3px;width:17px;height:17.4px;background:#2b2b2b"></div>
<div class="a" style="left:573px;top:785px;width:16px;height:16px;border-radius:3px;background:#c4c4c4"></div>
<svg style="left:593.3px;top:789px" width="14" height="8" viewBox="0 0 14 8"><path d="M0 4L3.5 0H14V8H3.5Z" fill="#e0e0e0"/><circle cx="3.8" cy="4" r="1.2" fill="#373737"/></svg>
<svg style="left:648px;top:787px" width="14" height="12" viewBox="0 0 14 12"><path d="M0 0.5H5L6.5 2.5H14V12H0Z" fill="#d8d8d8"/><path d="M0 3.6H14" stroke="#383838" stroke-width="0.8"/></svg>
<div class="a" style="left:610.7px;top:784.3px;width:13.5px;height:17.4px;background:#313131;border-radius:3px 0 0 3px"></div><div class="a" style="left:625px;top:784.3px;width:16.5px;height:17.4px;background:#313131;border-radius:0 3px 3px 0"></div>
<svg style="left:615px;top:789px" width="6" height="8" viewBox="0 0 6 8"><path d="M1 0.5L4.5 4L1 7.5" fill="none" stroke="#999" stroke-width="1"/></svg>
<div class="t" style="left:667px;top:784.5px">VerticalGrid</div>
<div class="a" style="left:494px;top:804px;width:686px;height:22px;background:#373737"></div>
<div class="a" style="left:496.5px;top:806.3px;width:17px;height:17.4px;background:#2b2b2b"></div>
<div class="a" style="left:515px;top:806.3px;width:17.6px;height:17.4px;background:#2b2b2b;border-radius:3px"></div>
<svg style="left:517px;top:810.5px" width="14" height="9" viewBox="0 0 14 9"><path d="M0.6 4.5Q7 -3 13.4 4.5Q7 12 0.6 4.5Z" fill="none" stroke="#ddd" stroke-width="1.1"/><circle cx="7" cy="4.5" r="2" fill="none" stroke="#ddd" stroke-width="1.1"/></svg>
<div class="a" style="left:534.5px;top:806.3px;width:17px;height:17.4px;background:#2b2b2b"></div>
<div class="a" style="left:573px;top:807px;width:16px;height:16px;border-radius:3px;background:#c4c4c4"></div>
<svg style="left:593.3px;top:811px" width="14" height="8" viewBox="0 0 14 8"><path d="M0 4L3.5 0H14V8H3.5Z" fill="#e0e0e0"/><circle cx="3.8" cy="4" r="1.2" fill="#373737"/></svg>
<svg style="left:648px;top:809px" width="14" height="12" viewBox="0 0 14 12"><path d="M0 0.5H5L6.5 2.5H14V12H0Z" fill="#d8d8d8"/><path d="M0 3.6H14" stroke="#383838" stroke-width="0.8"/></svg>
<div class="a" style="left:610.7px;top:806.3px;width:13.5px;height:17.4px;background:#313131;border-radius:3px 0 0 3px"></div><div class="a" style="left:625px;top:806.3px;width:16.5px;height:17.4px;background:#313131;border-radius:0 3px 3px 0"></div>
<svg style="left:615px;top:811px" width="6" height="8" viewBox="0 0 6 8"><path d="M1 0.5L4.5 4L1 7.5" fill="none" stroke="#999" stroke-width="1"/></svg>
<div class="t" style="left:667px;top:806.5px">HorizontalGrid</div>
<div class="a" style="left:494px;top:826px;width:686px;height:22px;background:#373737"></div>
<div class="a" style="left:496.5px;top:828.3px;width:17px;height:17.4px;background:#2b2b2b"></div>
<div class="a" style="left:515px;top:828.3px;width:17.6px;height:17.4px;background:#2b2b2b;border-radius:3px"></div>
<svg style="left:517px;top:832.5px" width="14" height="9" viewBox="0 0 14 9"><path d="M0.6 4.5Q7 -3 13.4 4.5Q7 12 0.6 4.5Z" fill="none" stroke="#ddd" stroke-width="1.1"/><circle cx="7" cy="4.5" r="2" fill="none" stroke="#ddd" stroke-width="1.1"/></svg>
<div class="a" style="left:534.5px;top:828.3px;width:17px;height:17.4px;background:#2b2b2b"></div>
<div class="a" style="left:573px;top:829px;width:16px;height:16px;border-radius:3px;background:#ffe87c"></div>
<svg style="left:593.3px;top:833px" width="14" height="8" viewBox="0 0 14 8"><path d="M0 4L3.5 0H14V8H3.5Z" fill="#e0e0e0"/><circle cx="3.8" cy="4" r="1.2" fill="#373737"/></svg>
<svg style="left:648.5px;top:830.5px" width="13" height="13" viewBox="0 0 13 13"><path d="M3.5 1H9.5M3.5 12H9.5M1 3.5V9.5M12 3.5V9.5" stroke="#f0e060" stroke-width="1.1"/><g fill="#eee"><rect x="0.2" y="0.2" width="1.8" height="1.8"/><rect x="11" y="0.2" width="1.8" height="1.8"/><rect x="0.2" y="11" width="1.8" height="1.8"/><rect x="11" y="11" width="1.8" height="1.8"/></g></svg>
<div class="a" style="left:610.7px;top:828.3px;width:13.5px;height:17.4px;background:#313131;border-radius:3px 0 0 3px"></div><div class="a" style="left:625px;top:828.3px;width:16.5px;height:17.4px;background:#313131;border-radius:0 3px 3px 0"></div>
<svg style="left:613.5px;top:834.5px" width="8" height="6" viewBox="0 0 9 6"><path d="M0.5 0.8L4.5 4.8L8.5 0.8" fill="none" stroke="#999" stroke-width="1.1"/></svg>
<div class="a" style="left:630.5px;top:834px;width:6px;height:6px;border-radius:50%;background:#eee"></div>
<div class="t" style="left:667px;top:828.5px">CenterRectangle</div>
<div class="a" style="left:494px;top:848px;width:686px;height:22px;background:#373737"></div>
<div class="a" style="left:494px;top:870px;width:686px;height:22px;background:#373737"></div>
<div class="a" style="left:494px;top:892px;width:686px;height:22px;background:#373737"></div>
<div class="a" style="left:494px;top:914px;width:686px;height:22px;background:#373737"></div>
<div class="a" style="left:496.5px;top:916.3px;width:17px;height:17.4px;background:#2b2b2b"></div>
<div class="a" style="left:515px;top:916.3px;width:17.6px;height:17.4px;background:#2b2b2b;border-radius:3px"></div>
<svg style="left:517px;top:920.5px" width="14" height="9" viewBox="0 0 14 9"><path d="M0.6 4.5Q7 -3 13.4 4.5Q7 12 0.6 4.5Z" fill="none" stroke="#ddd" stroke-width="1.1"/><circle cx="7" cy="4.5" r="2" fill="none" stroke="#ddd" stroke-width="1.1"/></svg>
<div class="a" style="left:534.5px;top:916.3px;width:17px;height:17.4px;background:#2b2b2b"></div>
<div class="a" style="left:573px;top:917px;width:16px;height:16px;border-radius:3px;background:#ffe87c"></div>
<svg style="left:593.3px;top:921px" width="14" height="8" viewBox="0 0 14 8"><path d="M0 4L3.5 0H14V8H3.5Z" fill="#e0e0e0"/><circle cx="3.8" cy="4" r="1.2" fill="#373737"/></svg>
<svg style="left:648.5px;top:918.5px" width="13" height="13" viewBox="0 0 13 13"><path d="M3.5 1H9.5M3.5 12H9.5M1 3.5V9.5M12 3.5V9.5" stroke="#f0e060" stroke-width="1.1"/><g fill="#eee"><rect x="0.2" y="0.2" width="1.8" height="1.8"/><rect x="11" y="0.2" width="1.8" height="1.8"/><rect x="0.2" y="11" width="1.8" height="1.8"/><rect x="11" y="11" width="1.8" height="1.8"/></g></svg>
<div class="t" style="left:667px;top:916.5px">RectangleBG</div>
<svg style="left:630px;top:848px" width="12" height="60" viewBox="630 848 12 60"><path d="M634 848V903.5M634 859.5H642M634 881.5H642M634 903.5H642" fill="none" stroke="#e4e4e4" stroke-width="1" stroke-dasharray="1 1"/></svg>
<div class="t" style="left:647.5px;top:850.5px">Rectangle.Corner Radius</div>
<div class="t" style="left:647.5px;top:872.5px">Rectangle.Size.H</div>
<div class="t" style="left:647.5px;top:894.5px">Rectangle.Size.W</div>
<div class="a" style="left:1139px;top:676px;width:9.5px;height:14px;background:#2c2c2c;border-radius:3px 0 0 3px"></div><div class="a" style="left:1149.5px;top:676px;width:9.5px;height:14px;background:#2c2c2c;border-radius:0 3px 3px 0"></div><svg style="left:1139px;top:676px" width="20" height="14" viewBox="0 0 20 14"><path d="M2 7L5 4.2H8V9.8H5Z" fill="#c8b060"/><path d="M18 7L15 4.2H12V9.8H15Z" fill="#b858dc"/></svg><div class="a" style="left:1165.5px;top:678.5px;width:9px;height:9px;border-radius:50%;border:1.1px solid #9a9a9a"></div>
<div class="a" style="left:1139px;top:698px;width:9.5px;height:14px;background:#2c2c2c;border-radius:3px 0 0 3px"></div><div class="a" style="left:1149.5px;top:698px;width:9.5px;height:14px;background:#2c2c2c;border-radius:0 3px 3px 0"></div><svg style="left:1139px;top:698px" width="20" height="14" viewBox="0 0 20 14"><path d="M2 7L5 4.2H8V9.8H5Z" fill="#8a7a58"/><path d="M18 7L15 4.2H12V9.8H15Z" fill="#9a60b0"/></svg><div class="a" style="left:1165.2px;top:700.2px;width:9.6px;height:9.6px;border-radius:50%;background:#2f9ef0"></div>
<div class="a" style="left:1139px;top:720px;width:9.5px;height:14px;background:#2c2c2c;border-radius:3px 0 0 3px"></div><div class="a" style="left:1149.5px;top:720px;width:9.5px;height:14px;background:#2c2c2c;border-radius:0 3px 3px 0"></div><svg style="left:1139px;top:720px" width="20" height="14" viewBox="0 0 20 14"><path d="M2 7L5 4.2H8V9.8H5Z" fill="#a09060"/><path d="M18 7L15 4.2H12V9.8H15Z" fill="#b858dc"/></svg><div class="a" style="left:1165.5px;top:722.5px;width:9px;height:9px;border-radius:50%;border:1.1px solid #9a9a9a"></div>
<div class="a" style="left:1139px;top:742px;width:9.5px;height:14px;background:#2c2c2c;border-radius:3px 0 0 3px"></div><div class="a" style="left:1149.5px;top:742px;width:9.5px;height:14px;background:#2c2c2c;border-radius:0 3px 3px 0"></div><svg style="left:1139px;top:742px" width="20" height="14" viewBox="0 0 20 14"><path d="M2 7L5 4.2H8V9.8H5Z" fill="#777"/><path d="M18 7L15 4.2H12V9.8H15Z" fill="#b858dc"/></svg><div class="a" style="left:1165.5px;top:744.5px;width:9px;height:9px;border-radius:50%;border:1.1px solid #9a9a9a"></div>
<div class="a" style="left:1139px;top:764px;width:9.5px;height:14px;background:#2c2c2c;border-radius:3px 0 0 3px;border:1px solid #8a7a40"></div><div class="a" style="left:1149.5px;top:764px;width:9.5px;height:14px;background:#2c2c2c;border-radius:0 3px 3px 0"></div><svg style="left:1139px;top:764px" width="20" height="14" viewBox="0 0 20 14"><path d="M2 7L5 4.2H8V9.8H5Z" fill="#c8b060"/><path d="M18 7L15 4.2H12V9.8H15Z" fill="#777"/></svg><div class="a" style="left:1165.5px;top:766.5px;width:9px;height:9px;border-radius:50%;border:1.1px solid #9a9a9a"></div>
<div class="a" style="left:1165.5px;top:788.5px;width:9px;height:9px;border-radius:50%;border:1.1px solid #9a9a9a"></div><div class="a" style="left:1165.5px;top:810.5px;width:9px;height:9px;border-radius:50%;border:1.1px solid #9a9a9a"></div>
<div class="a" style="left:1139px;top:830px;width:9.5px;height:14px;background:#2c2c2c;border-radius:3px 0 0 3px"></div><div class="a" style="left:1149.5px;top:830px;width:9.5px;height:14px;background:#2c2c2c;border-radius:0 3px 3px 0"></div><svg style="left:1139px;top:830px" width="20" height="14" viewBox="0 0 20 14"><path d="M2 7L5 4.2H8V9.8H5Z" fill="#777"/><path d="M18 7L15 4.2H12V9.8H15Z" fill="#b858dc"/></svg><div class="a" style="left:1165.5px;top:832.5px;width:9px;height:9px;border-radius:50%;border:1.1px solid #9a9a9a"></div>
<div class="a" style="left:1139px;top:918px;width:9.5px;height:14px;background:#2c2c2c;border-radius:3px 0 0 3px"></div><div class="a" style="left:1149.5px;top:918px;width:9.5px;height:14px;background:#2c2c2c;border-radius:0 3px 3px 0"></div><svg style="left:1139px;top:918px" width="20" height="14" viewBox="0 0 20 14"><path d="M2 7L5 4.2H8V9.8H5Z" fill="#c8b060"/><path d="M18 7L15 4.2H12V9.8H15Z" fill="#777"/></svg><div class="a" style="left:1165.5px;top:920.5px;width:9px;height:9px;border-radius:50%;border:1.1px solid #9a9a9a"></div>
<svg style="left:1122.5px;top:700.5px" width="9" height="9" viewBox="0 0 9 9"><circle cx="4.5" cy="4.5" r="3.7" fill="none" stroke="#777" stroke-width="0.9"/><path d="M1.8 7.2L7.2 1.8" stroke="#777" stroke-width="0.9"/></svg>
<svg style="left:1122.5px;top:722.5px" width="9" height="9" viewBox="0 0 9 9"><circle cx="4.5" cy="4.5" r="3.7" fill="none" stroke="#999" stroke-width="0.9"/><path d="M1.8 7.2L7.2 1.8" stroke="#999" stroke-width="0.9"/></svg>
<div class="fld" style="left:978px;top:851px;width:94px;height:16px;background:#303030"></div><div class="t" style="left:983px;top:851px;color:#555">#</div><div class="t" style="left:995px;top:851px;color:#8a8a8a">0.0</div>
<div class="t" style="left:1073.5px;top:851px;color:#777">+</div>
<div class="fld" style="left:1081.3px;top:851px;width:83.5px;height:16px;background:#2a2a2a"></div><div class="t" style="left:1086px;top:851px;color:#777">#</div><div class="t" style="left:1098px;top:851px">70.0</div>
<svg style="left:1153px;top:855px" width="8" height="8" viewBox="0 0 8 8"><path d="M4 0L8 4L4 8L0 4Z" fill="#30d070"/></svg>
<div class="a" style="left:1165.5px;top:852px;width:9px;height:14px;background:#2c2c2c;border-radius:0 3px 3px 0"></div><svg style="left:1166px;top:856px" width="7" height="6" viewBox="0 0 7 6"><path d="M0.5 0H3.5L6.5 3L3.5 6H0.5Z" fill="#999"/></svg>
<div class="fld" style="left:1081.3px;top:873px;width:83.5px;height:16px;background:#2a2a2a"></div><div class="t" style="left:1084px;top:873px;color:#777">H</div><div class="t" style="left:1098px;top:873px">700.0</div>
<svg style="left:1153px;top:877px" width="8" height="8" viewBox="0 0 8 8"><path d="M4 0L8 4L4 8L0 4Z" fill="#ccc"/></svg>
<div class="a" style="left:1165.5px;top:874px;width:9px;height:14px;background:#2c2c2c;border-radius:0 3px 3px 0"></div><svg style="left:1166px;top:878px" width="7" height="6" viewBox="0 0 7 6"><path d="M0.5 0H3.5L6.5 3L3.5 6H0.5Z" fill="#b858dc"/></svg>
<div class="fld" style="left:1081.3px;top:895px;width:83.5px;height:16px;background:#2a2a2a"></div><div class="t" style="left:1082.5px;top:895px;color:#777">W</div><div class="t" style="left:1098px;top:895px">700.0</div>
<svg style="left:1153px;top:899px" width="8" height="8" viewBox="0 0 8 8"><path d="M4 0L8 4L4 8L0 4Z" fill="#ccc"/></svg>
<div class="a" style="left:1165.5px;top:896px;width:9px;height:14px;background:#2c2c2c;border-radius:0 3px 3px 0"></div><svg style="left:1166px;top:900px" width="7" height="6" viewBox="0 0 7 6"><path d="M0.5 0H3.5L6.5 3L3.5 6H0.5Z" fill="#b858dc"/></svg>
<div class="a" style="left:494px;top:936px;width:686px;height:28px;background:#2c2c2c"></div>
<div class="a" style="left:1180px;top:672.5px;width:12px;height:292px;background:#303030"></div><div class="a" style="left:1181.5px;top:673.5px;width:9px;height:278px;border-radius:4.5px;background:#555"></div>
<div class="a" style="left:1109.3px;top:689.8px;width:76.2px;height:28.6px;border:3px solid #b8f020"></div>
<div class="a" style="left:494px;top:964px;width:698px;height:12px;background:#2a2a2a"></div><div class="a" style="left:494.5px;top:964.8px;width:684px;height:8.5px;border-radius:4.5px;background:#505050"></div>
<div class="a" style="left:494px;top:976px;width:698px;height:22px;background:#444"></div>
<div class="btn" style="left:497.5px;top:978px;width:18.5px;height:18.5px;background:#2a2a2a;border-color:#242424"></div><svg style="left:500px;top:983.3px" width="14" height="8" viewBox="0 0 14 8"><path d="M0 4L3.5 0H14V8H3.5Z" fill="#e0e0e0"/><circle cx="3.8" cy="4" r="1.2" fill="#2a2a2a"/></svg>
<div class="t" style="left:520.5px;top:978.5px">1 selected</div>
<div class="btn" style="left:984px;top:978px;width:19px;height:18.5px;background:#2a2a2a;border-color:#242424"></div><svg style="left:984px;top:978px" width="19" height="18.5" viewBox="0 0 19 18.5"><rect x="4.5" y="4.3" width="10" height="10" rx="1" fill="none" stroke="#ddd" stroke-width="1"/><rect x="8" y="7.8" width="3" height="3" fill="#ddd"/></svg>
<div class="a" style="left:1006.7px;top:978px;width:184px;height:18.5px;background:#5a5a5a;border-radius:4px"></div><div class="a" style="left:1007.7px;top:979px;width:86.5px;height:16.5px;background:#222;border-radius:3px"></div>
<svg style="left:1014px;top:982px" width="12" height="11" viewBox="0 0 12 11"><path d="M0 1H11M2 5.5H12M0.5 10H10" stroke="#35d070" stroke-width="1.8"/></svg><div class="t" style="left:1030px;top:978.5px">Time Editor</div>
<svg style="left:1102px;top:981px" width="13" height="13" viewBox="0 0 13 13"><path d="M3 0.5V10.5H12.5" fill="none" stroke="#ddd" stroke-width="1"/><path d="M0.5 11.5L10.5 3.5" stroke="#ddd" stroke-width="1"/></svg><div class="t" style="left:1119px;top:978.5px">Graph Editor</div>
<div class="a" style="left:1192px;top:629.7px;width:8.5px;height:371px;background:#1e1e1e"></div>
<div class="a" style="left:1195.6px;top:806px;width:1.4px;height:1.4px;background:#888"></div>
<div class="a" style="left:1195.6px;top:809px;width:1.4px;height:1.4px;background:#888"></div>
<div class="a" style="left:1195.6px;top:812px;width:1.4px;height:1.4px;background:#888"></div>
<div class="a" style="left:1195.6px;top:815px;width:1.4px;height:1.4px;background:#888"></div>
<div class="a" style="left:1195.6px;top:818px;width:1.4px;height:1.4px;background:#888"></div>
<div class="a" style="left:1195.6px;top:821px;width:1.4px;height:1.4px;background:#888"></div>
<div class="a" style="left:1195.6px;top:824px;width:1.4px;height:1.4px;background:#888"></div>
<div class="a" style="left:1200.5px;top:629.7px;width:713.5px;height:335px;background:#262626"></div>
<div class="t" style="left:1185.0px;top:629.5px;width:40px;text-align:center;color:#d8d8d8">0</div>
<div class="t" style="left:1228.0px;top:629.5px;width:40px;text-align:center;color:#d8d8d8">15</div>
<div class="t" style="left:1270.0px;top:629.5px;width:40px;text-align:center;color:#d8d8d8">30</div>
<div class="t" style="left:1312.0px;top:629.5px;width:40px;text-align:center;color:#d8d8d8">45</div>
<div class="t" style="left:1354.0px;top:629.5px;width:40px;text-align:center;color:#d8d8d8">60</div>
<div class="t" style="left:1396.0px;top:629.5px;width:40px;text-align:center;color:#d8d8d8">75</div>
<div class="t" style="left:1438.0px;top:629.5px;width:40px;text-align:center;color:#d8d8d8">90</div>
<div class="t" style="left:1480.0px;top:629.5px;width:40px;text-align:center;color:#d8d8d8">105</div>
<div class="t" style="left:1522.0px;top:629.5px;width:40px;text-align:center;color:#d8d8d8">120</div>
<div class="t" style="left:1564.0px;top:629.5px;width:40px;text-align:center;color:#d8d8d8">135</div>
<div class="t" style="left:1606.0px;top:629.5px;width:40px;text-align:center;color:#d8d8d8">150</div>
<div class="t" style="left:1648.0px;top:629.5px;width:40px;text-align:center;color:#d8d8d8">165</div>
<div class="t" style="left:1690.0px;top:629.5px;width:40px;text-align:center;color:#d8d8d8">180</div>
<div class="t" style="left:1732.0px;top:629.5px;width:40px;text-align:center;color:#d8d8d8">195</div>
<div class="t" style="left:1774.0px;top:629.5px;width:40px;text-align:center;color:#d8d8d8">210</div>
<div class="t" style="left:1816.0px;top:629.5px;width:40px;text-align:center;color:#d8d8d8">225</div>
<div class="t" style="left:1858.0px;top:629.5px;width:40px;text-align:center;color:#d8d8d8">240</div>
<svg style="left:1200px;top:640px" width="714" height="16" viewBox="1200 640 714 16"><path d="M1206.8 646.5V654M1215.2 650V654M1223.6 650V654M1232.0 650V654M1240.4 650V654M1248.8 646.5V654M1257.2 650V654M1265.6 650V654M1274.0 650V654M1282.4 650V654M1290.8 646.5V654M1299.2 650V654M1307.6 650V654M1316.0 650V654M1324.4 650V654M1332.8 646.5V654M1341.2 650V654M1349.6 650V654M1358.0 650V654M1366.4 650V654M1374.8 646.5V654M1383.2 650V654M1391.6 650V654M1400.0 650V654M1408.4 650V654M1416.8 646.5V654M1425.2 650V654M1433.6 650V654M1442.0 650V654M1450.4 650V654M1458.8 646.5V654M1467.2 650V654M1475.6 650V654M1484.0 650V654M1492.4 650V654M1500.8 646.5V654M1509.2 650V654M1517.6 650V654M1526.0 650V654M1534.4 650V654M1542.8 646.5V654M1551.2 650V654M1559.6 650V654M1568.0 650V654M1576.4 650V654M1584.8 646.5V654M1593.2 650V654M1601.6 650V654M1610.0 650V654M1618.4 650V654M1626.8 646.5V654M1635.2 650V654M1643.6 650V654M1652.0 650V654M1660.4 650V654M1668.8 646.5V654M1677.2 650V654M1685.6 650V654M1694.0 650V654M1702.4 650V654M1710.8 646.5V654M1719.2 650V654M1727.6 650V654M1736.0 650V654M1744.4 650V654M1752.8 646.5V654M1761.2 650V654M1769.6 650V654M1778.0 650V654M1786.4 650V654M1794.8 646.5V654M1803.2 650V654M1811.6 650V654M1820.0 650V654M1828.4 650V654M1836.8 646.5V654M1845.2 650V654M1853.6 650V654M1862.0 650V654M1870.4 650V654M1878.8 646.5V654M1887.2 650V654M1895.6 650V654M1904.0 650V654" stroke="#a8a8a8" stroke-width="1" fill="none"/></svg>
<div class="a" style="left:1208px;top:654.5px;width:699px;height:15.5px;background:#444"></div>
<div class="a" style="left:1908px;top:653px;width:4px;height:17.5px;background:#6cc8a8;border-radius:1px"></div>
<div class="a" style="left:1208px;top:674.2px;width:699px;height:17.6px;border-radius:2px;background:repeating-linear-gradient(135deg,#b8da74 0,#b8da74 2.2px,#e2f88e 2.2px,#e2f88e 3.1px,#ccf282 3.1px,#ccf282 14.6px,#e2f88e 14.6px,#e2f88e 15.4px,#b8da74 15.4px,#b8da74 24.9px)"></div>
<div class="t" style="left:1215px;top:673.5px;color:#333">GridStrokeWidth</div>
<div class="a" style="left:1208px;top:696.2px;width:699px;height:17.6px;border-radius:2px;background:repeating-linear-gradient(135deg,#dc9264 0,#dc9264 2.2px,#fab684 2.2px,#fab684 3.1px,#f4a672 3.1px,#f4a672 14.6px,#fab684 14.6px,#fab684 15.4px,#dc9264 15.4px,#dc9264 24.9px)"></div>
<div class="t" style="left:1215px;top:695.5px;color:#fff">DivideToGetAverage</div>
<div class="a" style="left:1208px;top:718.2px;width:699px;height:17.6px;border-radius:2px;background:repeating-linear-gradient(135deg,#dc9264 0,#dc9264 2.2px,#fab684 2.2px,#fab684 3.1px,#f4a672 3.1px,#f4a672 14.6px,#fab684 14.6px,#fab684 15.4px,#dc9264 15.4px,#dc9264 24.9px)"></div>
<div class="t" style="left:1215px;top:717.5px;color:#fff">AddGridSizes</div>
<div class="a" style="left:1208px;top:740.2px;width:699px;height:17.6px;border-radius:2px;background:radial-gradient(circle at 1.45px 1.45px,rgba(120,190,60,.75) 0.6px,rgba(120,190,60,0) 1.15px) 0 0/2.9px 2.9px,repeating-linear-gradient(135deg,#dcf2a0 0,#dcf2a0 2.2px,#eefabc 2.2px,#eefabc 15.4px,#dcf2a0 15.4px,#dcf2a0 24.9px);border:1px solid #f6faea"></div>
<div class="t" style="left:1215px;top:739.5px;color:#333">SquareSize</div>
<div class="a" style="left:1208px;top:762.2px;width:699px;height:17.6px;border-radius:2px;background:#ffe87c"></div>
<div class="t" style="left:1215px;top:761.5px;color:#333">SquaresOnShape</div>
<div class="a" style="left:1208px;top:784.2px;width:699px;height:17.6px;border-radius:2px;background:#c2c2c2"></div>
<div class="t" style="left:1215px;top:783.5px;color:#333">VerticalGrid</div>
<div class="a" style="left:1208px;top:806.2px;width:699px;height:17.6px;border-radius:2px;background:#c2c2c2"></div>
<div class="t" style="left:1215px;top:805.5px;color:#333">HorizontalGrid</div>
<div class="a" style="left:1208px;top:828.2px;width:699px;height:17.6px;border-radius:2px;background:#ffe87c"></div>
<div class="t" style="left:1215px;top:827.5px;color:#333">CenterRectangle</div>
<div class="a" style="left:1208px;top:916.2px;width:699px;height:17.6px;border-radius:2px;background:#ffe87c"></div>
<div class="t" style="left:1215px;top:915.5px;color:#333">RectangleBG</div>
<svg style="left:1200px;top:852px" width="714" height="12" viewBox="1200 852 714 12"><path d="M1212 858H1300" stroke="#ffe87c" stroke-width="2"/><path d="M1310 858H1342" stroke="#ffe87c" stroke-width="2"/><path d="M1352 858H1426" stroke="#ffe87c" stroke-width="2"/><path d="M1436 858H1454" stroke="#ffe87c" stroke-width="2" stroke-dasharray="4.5 4.5"/><path d="M1464 858H1524" stroke="#ffe87c" stroke-width="2"/><path d="M1534 858H1608" stroke="#ffe87c" stroke-width="2" stroke-dasharray="4.5 4.5"/><path d="M1618 858H1900" stroke="#ffe87c" stroke-width="2"/><path d="M1207 853.7L1211.3 858L1207 862.3L1202.7 858Z" fill="#d4d4d4"/><path d="M1305 853.7L1309.3 858L1305 862.3L1300.7 858Z" fill="#d4d4d4"/><path d="M1347 853.7L1351.3 858L1347 862.3L1342.7 858Z" fill="#d4d4d4"/><path d="M1431 853.7L1435.3 858L1431 862.3L1426.7 858Z" fill="#d4d4d4"/><path d="M1459 853.7L1463.3 858L1459 862.3L1454.7 858Z" fill="#d4d4d4"/><path d="M1529 853.7L1533.3 858L1529 862.3L1524.7 858Z" fill="#d4d4d4"/><path d="M1613 853.7L1617.3 858L1613 862.3L1608.7 858Z" fill="#d4d4d4"/><path d="M1905 853.7L1909.3 858L1905 862.3L1900.7 858Z" fill="#d4d4d4"/></svg>
<svg style="left:1200px;top:874px" width="714" height="12" viewBox="1200 874 714 12"><path d="M1234 880H1286" stroke="#ffe87c" stroke-width="2"/><path d="M1296 880H1358" stroke="#ffe87c" stroke-width="2"/><path d="M1368 880H1404" stroke="#ffe87c" stroke-width="2" stroke-dasharray="4.5 4.5"/><path d="M1414 880H1468" stroke="#ffe87c" stroke-width="2"/><path d="M1478 880H1538" stroke="#ffe87c" stroke-width="2"/><path d="M1548 880H1622" stroke="#ffe87c" stroke-width="2"/><path d="M1229 875.7L1233.3 880L1229 884.3L1224.7 880Z" fill="#d4d4d4"/><path d="M1291 875.7L1295.3 880L1291 884.3L1286.7 880Z" fill="#d4d4d4"/><path d="M1363 875.7L1367.3 880L1363 884.3L1358.7 880Z" fill="#d4d4d4"/><path d="M1409 875.7L1413.3 880L1409 884.3L1404.7 880Z" fill="#d4d4d4"/><path d="M1473 875.7L1477.3 880L1473 884.3L1468.7 880Z" fill="#d4d4d4"/><path d="M1543 875.7L1547.3 880L1543 884.3L1538.7 880Z" fill="#d4d4d4"/><path d="M1627 875.7L1631.3 880L1627 884.3L1622.7 880Z" fill="#d4d4d4"/></svg>
<svg style="left:1200px;top:896px" width="714" height="12" viewBox="1200 896 714 12"><path d="M1268 902H1314" stroke="#ffe87c" stroke-width="2"/><path d="M1324 902H1342" stroke="#ffe87c" stroke-width="2"/><path d="M1352 902H1404" stroke="#ffe87c" stroke-width="2" stroke-dasharray="4.5 4.5"/><path d="M1414 902H1510" stroke="#ffe87c" stroke-width="2"/><path d="M1520 902H1622" stroke="#ffe87c" stroke-width="2"/><path d="M1263 897.7L1267.3 902L1263 906.3L1258.7 902Z" fill="#d4d4d4"/><path d="M1319 897.7L1323.3 902L1319 906.3L1314.7 902Z" fill="#d4d4d4"/><path d="M1347 897.7L1351.3 902L1347 906.3L1342.7 902Z" fill="#d4d4d4"/><path d="M1409 897.7L1413.3 902L1409 906.3L1404.7 902Z" fill="#d4d4d4"/><path d="M1515 897.7L1519.3 902L1515 906.3L1510.7 902Z" fill="#d4d4d4"/><path d="M1627 897.7L1631.3 902L1627 906.3L1622.7 902Z" fill="#d4d4d4"/></svg>
<div class="a" style="left:1202.6px;top:652px;width:5px;height:18.6px;background:#74c8b0"></div><div class="a" style="left:1206.4px;top:670px;width:1.2px;height:294px;background:#5aa890"></div>
<svg style="left:1199.7px;top:643.5px" width="14.4" height="9.4" viewBox="0 0 14.4 9.4"><path d="M0 0H14.4L7.4 9.4Z" fill="#74c8b0"/></svg>
<div class="a" style="left:1200.5px;top:964px;width:713.5px;height:12px;background:#2a2a2a"></div><div class="a" style="left:1201.5px;top:964.6px;width:711px;height:8.6px;border-radius:4.5px;background:#505050"></div>
<div class="a" style="left:1200.5px;top:976px;width:713.5px;height:22px;background:#444"></div>
<div class="btn" style="left:1202px;top:978px;width:19px;height:18.5px;background:#2a2a2a;border-color:#242424"></div><svg style="left:1202px;top:978px" width="19" height="18.5" viewBox="0 0 19 18.5"><path d="M3 4.5H16M3 8.5H16" stroke="#e0e0e0" stroke-width="1.6"/><path d="M3 12.5H5M7 12.5H9M11 12.5H13" stroke="#e0e0e0" stroke-width="1.4"/><path d="M18 14.5V17.5H15Z" fill="#2fca6a"/></svg>
<div class="fld" style="left:1224px;top:979.3px;width:150px;height:15.5px;background:#2a2a2a"></div><div class="t" style="left:1227px;top:978.5px">Default Keyframe Layer</div>
<div class="fld" style="left:1380px;top:979.3px;width:70px;height:15.5px;background:#2a2a2a"></div><div class="t" style="left:1385px;top:978.5px;color:#555">F</div><div class="t" style="left:1398px;top:978.5px">-</div>
<div class="t" style="left:1456px;top:978.5px">Align:</div>
<div class="a" style="left:1492.3px;top:978px;width:52.2px;height:18.5px;background:#202020;border-radius:4px;border:1px solid #2c2c2c"></div>
<svg style="left:1492.3px;top:978px" width="17.4" height="18.5" viewBox="0 0 17.4 18.5"><path d="M2.5 3V15" stroke="#eee" stroke-width="1.1"/><path d="M5 6.5H7.5M9.5 6.5H11M5 11.5H9M11 11.5H14" stroke="#eee" stroke-width="1.4"/></svg>
<div class="a" style="left:1509.2px;top:978px;width:1px;height:18.5px;background:#3c3c3c"></div>
<svg style="left:1509.7px;top:978px" width="17.4" height="18.5" viewBox="0 0 17.4 18.5"><path d="M8.7 2V16" stroke="#eee" stroke-width="1.1"/><path d="M4 6.5H7M10.5 6.5H13.5M3 11.5H7M10.5 11.5H14.5" stroke="#eee" stroke-width="1.4"/></svg>
<div class="a" style="left:1526.6px;top:978px;width:1px;height:18.5px;background:#3c3c3c"></div>
<svg style="left:1527.1px;top:978px" width="17.4" height="18.5" viewBox="0 0 17.4 18.5"><path d="M15 3V15" stroke="#eee" stroke-width="1.1"/><path d="M6.5 6.5H8M10 6.5H12.5M3.5 11.5H6.5M8.5 11.5H12.5" stroke="#eee" stroke-width="1.4"/></svg>
<div class="btn" style="left:1549.3px;top:978px;width:17.2px;height:18.5px;background:#333;border-color:#262626"></div><svg style="left:1549.3px;top:978px" width="17.2" height="18.5" viewBox="0 0 17.2 18.5"><rect x="3.5" y="4.2" width="10.2" height="10.2" fill="none" stroke="#ddd" stroke-width="1" stroke-dasharray="2.5 1.3"/><rect x="2.6" y="3.3" width="2" height="2" fill="#ddd"/><rect x="12.6" y="3.3" width="2" height="2" fill="#ddd"/><rect x="2.6" y="13.3" width="2" height="2" fill="#ddd"/><rect x="12.6" y="13.3" width="2" height="2" fill="#ddd"/></svg>
<div class="a" style="left:1570.2px;top:978px;width:30.399999999999864px;height:18.5px;background:#2a2a2a;border-radius:4px;border:1px solid #262626"></div><div class="a" style="left:1586.9px;top:978px;width:1px;height:18.5px;background:#3a3a3a"></div><svg style="left:1591.0px;top:983.7px" width="6" height="7" viewBox="0 0 6 7"><path d="M0.6 0.6V6.4L5.4 3.5Z" fill="none" stroke="#9a9a9a" stroke-width="0.9"/></svg><svg style="left:1570.2px;top:978px" width="17.200000000000045" height="18.5" viewBox="0 0 17.5 18.5"><path d="M6 14.5L4.2 10Q3 5.6 8 4.8Q12 4.4 14 8.2" fill="none" stroke="#ddd" stroke-width="2.1"/></svg>
<div class="a" style="left:1605.6px;top:978px;width:30.0px;height:18.5px;background:#2a2a2a;border-radius:4px;border:1px solid #262626"></div><div class="a" style="left:1623.0px;top:978px;width:1px;height:18.5px;background:#3a3a3a"></div><svg style="left:1626.55px;top:983.7px" width="6" height="7" viewBox="0 0 6 7"><path d="M0.6 0.6V6.4L5.4 3.5Z" fill="none" stroke="#9a9a9a" stroke-width="0.9"/></svg><svg style="left:1605.6px;top:978px" width="17.90000000000009" height="18.5" viewBox="0 0 17.5 18.5"><path d="M8.7 3.5V15.5" stroke="#ddd" stroke-width="1.1"/><path d="M2.5 9.5H15" stroke="#ddd" stroke-width="1" stroke-dasharray="3 1.2"/><path d="M5.5 7.5V11.5M12 7.5V11.5" stroke="#ddd" stroke-width="1"/></svg>
<svg style="left:1742.5px;top:979.5px" width="16" height="16" viewBox="0 0 16 16"><circle cx="7" cy="7" r="5.2" fill="none" stroke="#ccc" stroke-width="1.1"/><path d="M4.5 7H9.5" stroke="#ccc" stroke-width="1.1"/><path d="M10.8 10.8L14 14" stroke="#ccc" stroke-width="1.8"/></svg>
<div class="a" style="left:1767px;top:986px;width:114px;height:2.5px;border-radius:1px;background:#3a3a3a"></div><div class="a" style="left:1761.5px;top:981.8px;width:11px;height:11px;border-radius:50%;background:#4fae92;border:2.5px solid #84d6be"></div>
<svg style="left:1886.5px;top:979.5px" width="16" height="16" viewBox="0 0 16 16"><circle cx="7" cy="7" r="5.2" fill="none" stroke="#ccc" stroke-width="1.1"/><path d="M4.5 7H9.5M7 4.5V9.5" stroke="#ccc" stroke-width="1.1"/><path d="M10.8 10.8L14 14" stroke="#ccc" stroke-width="1.8"/></svg>
<div class="a" style="left:490px;top:998px;width:1430px;height:5px;background:#1c1c1c"></div>
<div class="a" style="left:494px;top:1003px;width:1420px;height:24px;background:#3c3c3c"></div>
<div class="a" style="left:497.6px;top:1009.5px;width:2px;height:2px;background:#777"></div>
<div class="a" style="left:497.6px;top:1014.5px;width:2px;height:2px;background:#777"></div>
<div class="a" style="left:497.6px;top:1019.5px;width:2px;height:2px;background:#777"></div>
<div class="btn" style="left:507px;top:1005.5px;width:18px;height:19px;background:#2a2a2a;border-color:#242424"></div><svg style="left:507px;top:1005.5px" width="18" height="19" viewBox="0 0 18 19"><path d="M3 4H14.5V12.5H12V15.5L9 12.5H3Z" fill="#e4e4e4"/><path d="M5 6.5H12.5M5 8.5H12.5M5 10.5H10" stroke="#2a2a2a" stroke-width="0.9"/><path d="M17.5 15V18H14.5Z" fill="#2fca6a"/></svg>
<div class="a" style="left:527.5px;top:1008px;width:19px;height:14px;border-radius:2.5px;background:#e06c75"></div><div class="t" style="left:527.5px;top:1006px;width:19px;text-align:center;color:#3a1a1a;font-size:12px">1</div>
<div class="a" style="left:553.7px;top:1012px;width:6px;height:6px;border-radius:50%;background:#e06c75"></div>
<div class="t" style="left:565px;top:1006.5px">Save reminder: 41 minutes since your last save.</div>
<div class="t" style="left:1349px;top:1006px;font-style:italic;letter-spacing:-0.6px;color:#e8e8e8">Click to see next message</div>
<div class="a" style="left:1477px;top:1006px;width:79px;height:18px;background:#d8b860;border-radius:1px"></div><div class="t" style="left:1482px;top:1007px;color:#222">Feedback</div>
<div class="a" style="left:1560px;top:1006px;width:108.5px;height:18px;background:#30c474;border-radius:1px"></div><div class="t" style="left:1565px;top:1007px;color:#222">Upgrade to Pro</div>
<div class="a" style="left:1672px;top:1006px;width:129.5px;height:18px;background:#c484f4;border-radius:1px"></div><div class="t" style="left:1677px;top:1007px;color:#222">New Beta Available</div>
<div class="a" style="left:1805.2px;top:1006px;width:105.5px;height:18px;background:#44a8f4;border-radius:1px"></div><div class="t" style="left:1810.2px;top:1007px;color:#222">Tips and Tricks</div>
<svg style="left:1538px;top:1009px" width="13" height="12" viewBox="0 0 13 12"><rect x="1" y="0.5" width="8" height="11" fill="#f4f0e8"/><path d="M2.5 3H7.5M2.5 5H7.5M2.5 7H6" stroke="#b0a898" stroke-width="0.8"/><path d="M5 10L11.5 3.5L12.5 4.5L6 11Z" fill="#e06030"/></svg>
<svg style="left:1648px;top:1009px" width="15" height="12" viewBox="0 0 15 12"><path d="M1 4Q3.5 0 6 4V11H1Z" fill="#f0c838"/><path d="M9 4Q11.5 0 14 4V11H9Z" fill="#f0c838"/></svg>
<svg style="left:1783px;top:1008.5px" width="13" height="13" viewBox="0 0 14 14"><circle cx="7" cy="8" r="5.5" fill="#f4b840"/><path d="M3 2L7 5L2.5 6.5Z" fill="#e05088"/><circle cx="5" cy="7" r="0.8" fill="#533"/><circle cx="9" cy="7" r="0.8" fill="#533"/><path d="M5 10Q7 12 9 10" stroke="#533" stroke-width="0.8" fill="none"/></svg>
<svg style="left:1892px;top:1009px" width="12" height="12" viewBox="0 0 14 14"><path d="M13 1Q7 1.5 4 7L7 10Q12.5 7 13 1Z" fill="#e8e8f0"/><path d="M4 7L1 7.5L3 5ZM7 10L6.5 13L9 11Z" fill="#e04050"/><circle cx="9.5" cy="4.5" r="1.2" fill="#4890e0"/><path d="M3.5 10.5L1 13" stroke="#f0a030" stroke-width="1.4"/></svg>
<div class="a" style="left:490px;top:1027px;width:1430px;height:2px;background:#1c1c1c"></div>
<svg style="left:0;top:0" width="1920" height="1029" viewBox="0 0 1920 1029"><path d="M232 489C627 489 780 705 1170 705" fill="none" stroke="#3a9de0" stroke-width="1.1"/><circle cx="232" cy="489" r="4.3" fill="#2f9ef0"/></svg>
</div></body></html>
